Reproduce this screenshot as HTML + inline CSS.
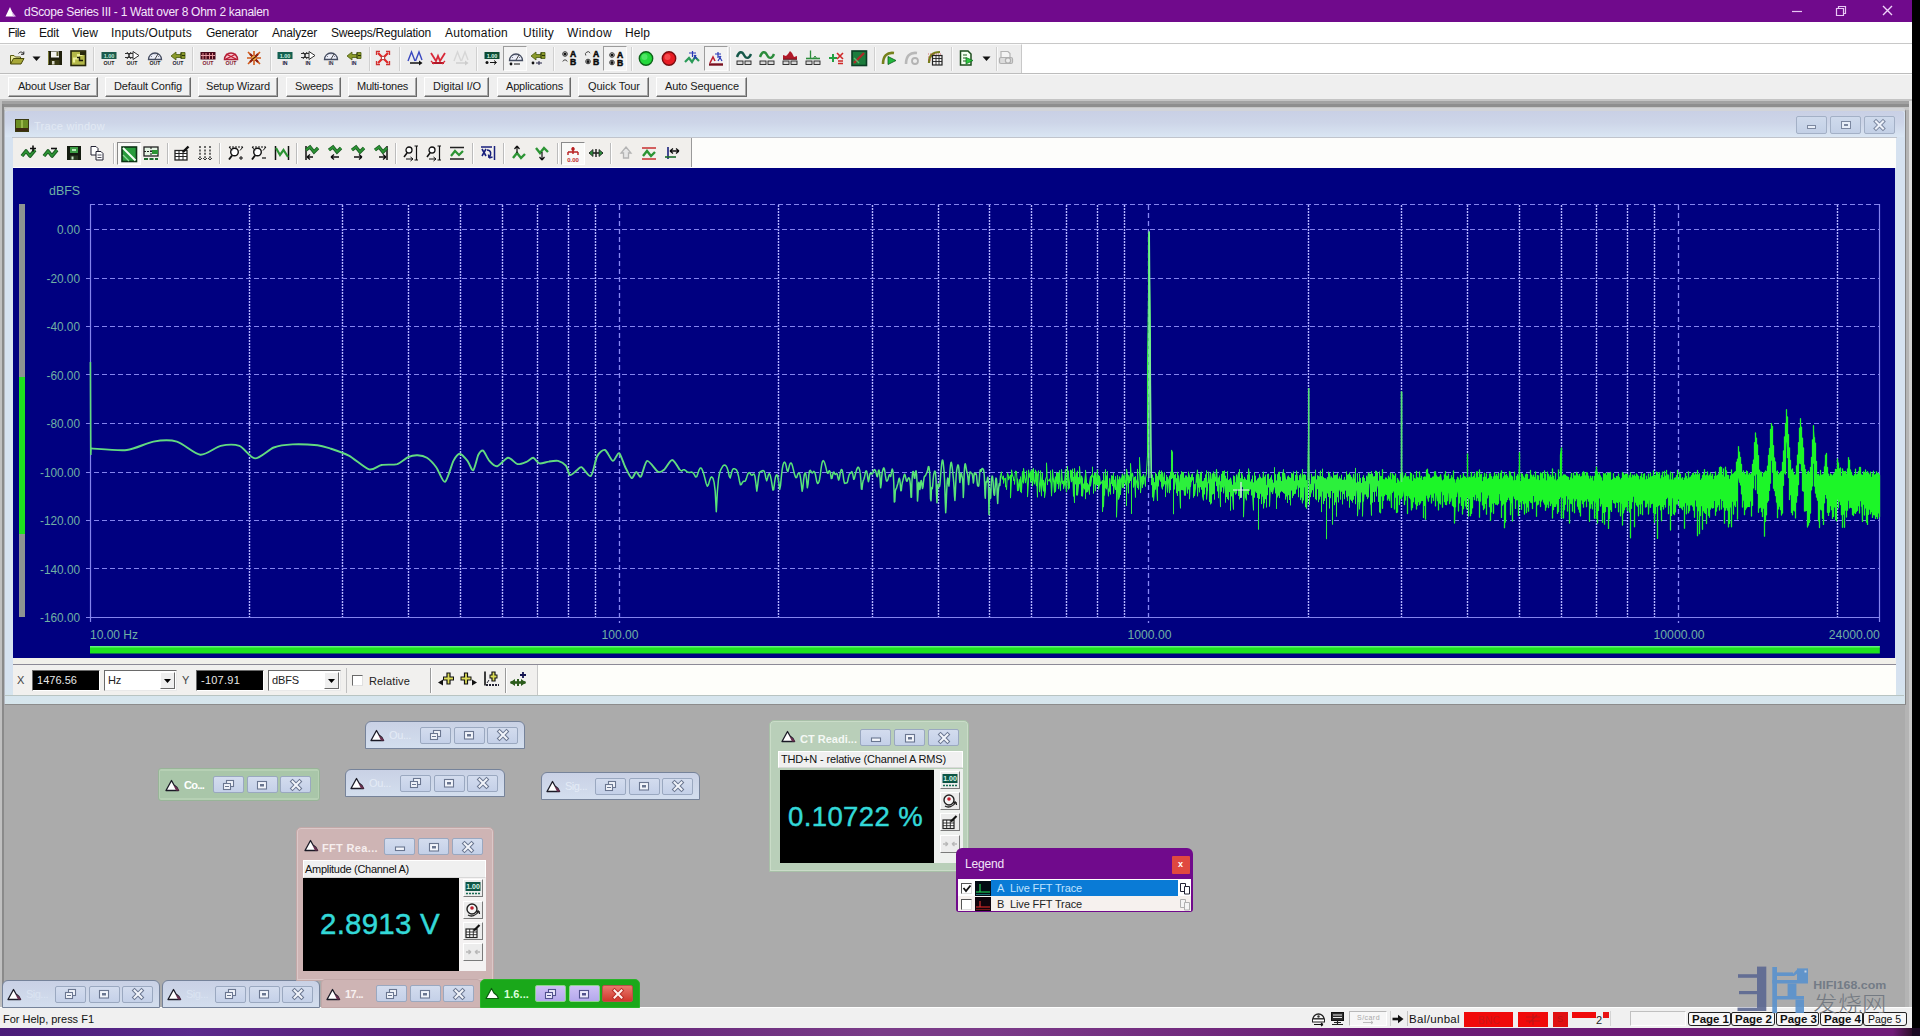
<!DOCTYPE html>
<html lang="en"><head><meta charset="utf-8"><title>dScope Series III - 1 Watt over 8 Ohm 2 kanalen</title>
<style>
html,body{margin:0;padding:0;background:#000;}
body{width:1920px;height:1036px;overflow:hidden;position:relative;font-family:"Liberation Sans",sans-serif;}
#app{position:absolute;left:0;top:0;width:1920px;height:1036px;overflow:hidden;}
#app div,#app span.t,#app svg.i{position:absolute;box-sizing:border-box;}
span.t{white-space:pre;}
svg{overflow:visible;}
svg text{font-family:"Liberation Sans",sans-serif;}
</style></head><body><div id="app">
<div style="left:0px;top:0px;width:1912px;height:23px;background:#700a8c;"></div>
<div style="left:0px;top:22px;width:1912px;height:22px;background:#ffffff;"></div>
<div style="left:0px;top:43px;width:1912px;height:1px;background:#c8c8c8;"></div>
<div style="left:0px;top:44px;width:1912px;height:30px;background:#ffffff;"></div>
<div style="left:0px;top:44px;width:1022px;height:30px;background:#ededed;border-top:1px solid #fafafa;border-right:1px solid #c8c8c8;"></div>
<div style="left:0px;top:73px;width:1912px;height:1px;background:#bdbdbd;"></div>
<div style="left:0px;top:74px;width:1912px;height:26px;background:#efefef;border-top:1px solid #fbfbfb;"></div>
<div style="left:0px;top:99px;width:1912px;height:908px;background:#ababab;"></div>
<div style="left:0px;top:99px;width:1912px;height:2px;background:#c4c4c4;"></div>
<div style="left:0px;top:101px;width:1912px;height:3px;background:#a2a2a2;"></div>
<div style="left:0px;top:104px;width:1912px;height:3px;background:#8e8e8e;"></div>
<div style="left:0px;top:107px;width:1912px;height:3px;background:#c6c6c6;"></div>
<div style="left:0px;top:101px;width:2px;height:906px;background:#c0c0c0;"></div>
<div style="left:2px;top:104px;width:2px;height:903px;background:#8a8a8a;"></div>
<div style="left:1905px;top:110px;width:7px;height:897px;background:#b4b4b4;"></div>
<div style="left:1909px;top:101px;width:3px;height:906px;background:linear-gradient(180deg,#e2e2e2,#d0d0d0 30%,#c2c2c2);"></div>
<div style="left:0px;top:1007px;width:1912px;height:21px;background:#f0f0f0;border-top:1px solid #fdfdfd;"></div>
<div style="left:0px;top:1028px;width:1912px;height:8px;background:linear-gradient(90deg,#4a1c78 0%,#5a2a8c 10%,#5a1a72 25%,#7a3c88 46%,#7a3a88 52%,#6a1c74 72%,#701c78 99%,#30102c 100%);"></div>
<div style="left:1912px;top:1028px;width:8px;height:8px;background:#1c0a24;"></div>
<svg class="i" style="left:5px;top:6px;" width="12" height="11" viewBox="0 0 12 11"><path d="M0.5 10.5 L5 1 L7 5.5 L9.5 10.5 Z" fill="#fff"/><path d="M6.5 5 L11 10.5 L8 10.5Z" fill="#d9b7e6"/></svg>
<span id="t1" class="t" style="left:24px;top:5.842px;font-size:12px;line-height:12px;color:#f4e6fa;letter-spacing:-0.270px;">dScope Series III - 1 Watt over 8 Ohm 2 kanalen</span>
<svg class="i" style="left:1791px;top:5px;" width="14" height="12" viewBox="0 0 14 12"><path d="M1 6.5 H11" stroke="#e8c8f4" stroke-width="1.2" fill="none"/></svg>
<svg class="i" style="left:1835px;top:4px;" width="14" height="14" viewBox="0 0 14 14"><path d="M1.5 4.5 H8.5 V11.5 H1.5Z M3.5 4.5 V2.5 H10.5 V9.5 H8.5" stroke="#e8c8f4" stroke-width="1.2" fill="none"/></svg>
<svg class="i" style="left:1881px;top:4px;" width="14" height="14" viewBox="0 0 14 14"><path d="M2 2 L11 11 M11 2 L2 11" stroke="#f0d4fa" stroke-width="1.4" fill="none"/></svg>
<span id="t2" class="t" style="left:8px;top:26.842px;font-size:12px;line-height:12px;color:#111;letter-spacing:-0.586px;">File</span>
<span id="t3" class="t" style="left:39px;top:26.842px;font-size:12px;line-height:12px;color:#111;letter-spacing:-0.172px;">Edit</span>
<span id="t4" class="t" style="left:72px;top:26.842px;font-size:12px;line-height:12px;color:#111;letter-spacing:0.051px;">View</span>
<span id="t5" class="t" style="left:111px;top:26.842px;font-size:12px;line-height:12px;color:#111;letter-spacing:0.210px;">Inputs/Outputs</span>
<span id="t6" class="t" style="left:206px;top:26.842px;font-size:12px;line-height:12px;color:#111;letter-spacing:-0.226px;">Generator</span>
<span id="t7" class="t" style="left:272px;top:26.842px;font-size:12px;line-height:12px;color:#111;letter-spacing:-0.211px;">Analyzer</span>
<span id="t8" class="t" style="left:331px;top:26.842px;font-size:12px;line-height:12px;color:#111;letter-spacing:-0.201px;">Sweeps/Regulation</span>
<span id="t9" class="t" style="left:445px;top:26.842px;font-size:12px;line-height:12px;color:#111;letter-spacing:0.228px;">Automation</span>
<span id="t10" class="t" style="left:523px;top:26.842px;font-size:12px;line-height:12px;color:#111;letter-spacing:0.237px;">Utility</span>
<span id="t11" class="t" style="left:567px;top:26.842px;font-size:12px;line-height:12px;color:#111;letter-spacing:0.385px;">Window</span>
<span id="t12" class="t" style="left:625px;top:26.842px;font-size:12px;line-height:12px;color:#111;letter-spacing:0.078px;">Help</span>
<div style="left:8px;top:77px;width:90px;height:20px;background:#f1f1f1;border:1px solid;border-color:#fff #6a6a6a #6a6a6a #fff;box-shadow:inset -1px -1px 0 #a8a8a8;"></div>
<span id="t13" class="t" style="left:18px;top:81.1885px;font-size:11px;line-height:11px;color:#1a1a1a;letter-spacing:-0.229px;">About User Bar</span>
<div style="left:105px;top:77px;width:86px;height:20px;background:#f1f1f1;border:1px solid;border-color:#fff #6a6a6a #6a6a6a #fff;box-shadow:inset -1px -1px 0 #a8a8a8;"></div>
<span id="t14" class="t" style="left:114px;top:81.1885px;font-size:11px;line-height:11px;color:#1a1a1a;letter-spacing:-0.122px;">Default Config</span>
<div style="left:198px;top:77px;width:80px;height:20px;background:#f1f1f1;border:1px solid;border-color:#fff #6a6a6a #6a6a6a #fff;box-shadow:inset -1px -1px 0 #a8a8a8;"></div>
<span id="t15" class="t" style="left:206px;top:81.1885px;font-size:11px;line-height:11px;color:#1a1a1a;letter-spacing:-0.169px;">Setup Wizard</span>
<div style="left:286px;top:77px;width:55px;height:20px;background:#f1f1f1;border:1px solid;border-color:#fff #6a6a6a #6a6a6a #fff;box-shadow:inset -1px -1px 0 #a8a8a8;"></div>
<span id="t16" class="t" style="left:295px;top:81.1885px;font-size:11px;line-height:11px;color:#1a1a1a;letter-spacing:-0.190px;">Sweeps</span>
<div style="left:348px;top:77px;width:69px;height:20px;background:#f1f1f1;border:1px solid;border-color:#fff #6a6a6a #6a6a6a #fff;box-shadow:inset -1px -1px 0 #a8a8a8;"></div>
<span id="t17" class="t" style="left:357px;top:81.1885px;font-size:11px;line-height:11px;color:#1a1a1a;letter-spacing:-0.255px;">Multi-tones</span>
<div style="left:424px;top:77px;width:65px;height:20px;background:#f1f1f1;border:1px solid;border-color:#fff #6a6a6a #6a6a6a #fff;box-shadow:inset -1px -1px 0 #a8a8a8;"></div>
<span id="t18" class="t" style="left:433px;top:81.1885px;font-size:11px;line-height:11px;color:#1a1a1a;letter-spacing:-0.027px;">Digital I/O</span>
<div style="left:497px;top:77px;width:74px;height:20px;background:#f1f1f1;border:1px solid;border-color:#fff #6a6a6a #6a6a6a #fff;box-shadow:inset -1px -1px 0 #a8a8a8;"></div>
<span id="t19" class="t" style="left:506px;top:81.1885px;font-size:11px;line-height:11px;color:#1a1a1a;letter-spacing:-0.194px;">Applications</span>
<div style="left:578px;top:77px;width:71px;height:20px;background:#f1f1f1;border:1px solid;border-color:#fff #6a6a6a #6a6a6a #fff;box-shadow:inset -1px -1px 0 #a8a8a8;"></div>
<span id="t20" class="t" style="left:588px;top:81.1885px;font-size:11px;line-height:11px;color:#1a1a1a;letter-spacing:-0.039px;">Quick Tour</span>
<div style="left:656px;top:77px;width:91px;height:20px;background:#f1f1f1;border:1px solid;border-color:#fff #6a6a6a #6a6a6a #fff;box-shadow:inset -1px -1px 0 #a8a8a8;"></div>
<span id="t21" class="t" style="left:665px;top:81.1885px;font-size:11px;line-height:11px;color:#1a1a1a;letter-spacing:-0.095px;">Auto Sequence</span>
<span id="t22" class="t" style="left:3px;top:1014.19px;font-size:11px;line-height:11px;color:#111;letter-spacing:-0.005px;">For Help, press F1</span>
<div style="left:4px;top:108px;width:1902px;height:597px;background:linear-gradient(180deg,#d6e2f0 0%,#d6e2f0 96%,#d6e6ec 100%);border:solid;border-width:3px 1.5px 1px 1px;border-color:#d2d4d8 #858585 #8c8c8c #b4b8c0;border-radius:4px 4px 0 0;"></div>
<div style="left:5px;top:111px;width:1899px;height:26px;background:linear-gradient(180deg,#c9d0e5 0%,#cdd5e8 45%,#dae6f3 100%);border-radius:3px 3px 0 0;"></div>
<div style="left:12px;top:137px;width:1885px;height:1px;background:#c0c4cc;"></div>
<div style="left:13px;top:138px;width:1883px;height:30px;background:#fdfdfb;"></div>
<div style="left:13px;top:138px;width:679px;height:29px;background:#f1efec;border-right:1px solid #9a9a9a;"></div>
<div style="left:13px;top:658px;width:1883px;height:37px;background:#fefefa;"></div>
<div style="left:5px;top:695px;width:1899px;height:1px;background:#b8c4c2;"></div>
<div style="left:13px;top:658px;width:1883px;height:6px;background:#f1f0ea;"></div>
<div style="left:13px;top:664px;width:1883px;height:1px;background:#8c8a96;"></div>
<div style="left:13px;top:665px;width:525px;height:30px;background:#f1f0ee;border-right:1px solid #c9c9c9;"></div>
<svg class="i" style="left:15px;top:119px;" width="14" height="13" viewBox="0 0 14 13"><rect x="0.5" y="0.5" width="13" height="12" fill="#6b8e23" stroke="#3a3a10"/><rect x="1" y="9" width="12" height="3" fill="#3c2a10"/><path d="M7 1V9" stroke="#c8e070"/></svg>
<span id="t23" class="t" style="left:34px;top:120.689px;font-size:11px;line-height:11px;color:#e2e9f4;letter-spacing:0.295px;">Trace window</span>
<div style="left:1796px;top:116px;width:31px;height:18px;background:linear-gradient(180deg,#cfdaec,#c3d0e6);border:1px solid #a3b0c6;border-radius:2px;"></div>
<svg class="i" style="left:1804px;top:119px;" width="15" height="12" viewBox="0 0 15 12"><rect x="3.5" y="6.5" width="8" height="3" fill="#e8eef8" stroke="#7c88a0"/></svg>
<div style="left:1830px;top:116px;width:31px;height:18px;background:linear-gradient(180deg,#cfdaec,#c3d0e6);border:1px solid #a3b0c6;border-radius:2px;"></div>
<svg class="i" style="left:1838px;top:119px;" width="15" height="12" viewBox="0 0 15 12"><rect x="3.5" y="2.5" width="9" height="7" fill="#e8eef8" stroke="#7c88a0"/><rect x="6" y="5" width="4" height="2" fill="#7c88a0"/></svg>
<div style="left:1864px;top:116px;width:31px;height:18px;background:linear-gradient(180deg,#cfdaec,#c3d0e6);border:1px solid #a3b0c6;border-radius:2px;"></div>
<svg class="i" style="left:1872px;top:119px;" width="15" height="12" viewBox="0 0 15 12"><path d="M4 2.5 L11 9.5 M11 2.5 L4 9.5" stroke="#7c88a0" stroke-width="4" stroke-linecap="square" fill="none"/><path d="M4 2.5 L11 9.5 M11 2.5 L4 9.5" stroke="#eef2fa" stroke-width="2" stroke-linecap="square" fill="none"/></svg>
<svg class="i" style="left:0;top:0" width="1912" height="700" viewBox="0 0 1912 700"><rect x="13" y="168" width="1882" height="490" fill="#000080"/><rect x="19" y="204" width="6" height="413" fill="#8e9492"/><rect x="19" y="377" width="6" height="157" fill="#1fe01f"/><rect x="90" y="646" width="1789.82" height="7.5" fill="#1ee21e"/><rect x="90" y="646" width="1789.82" height="1.5" fill="#62f27a"/><path d="M249.5 205V617M342.5 205V617M408.5 205V617M460.5 205V617M502.5 205V617M537.5 205V617M568.5 205V617M595.5 205V617M778.5 205V617M872.5 205V617M938.5 205V617M989.5 205V617M1031.5 205V617M1066.5 205V617M1097.5 205V617M1124.5 205V617M1308.5 205V617M1401.5 205V617M1467.5 205V617M1519.5 205V617M1561.5 205V617M1596.5 205V617M1627.5 205V617M1654.5 205V617M1837.5 205V617" stroke="#b4b4ff" stroke-width="1.4" stroke-dasharray="2 1" fill="none"/><path d="M619.5 205V623M1148.5 205V623M1678.5 205V623" stroke="#8888f4" stroke-width="1.3" stroke-dasharray="5 3" fill="none"/><path d="M86 229.5H1879.82M86 278.5H1879.82M86 326.5H1879.82M86 374.5H1879.82M86 423.5H1879.82M86 472.5H1879.82M86 520.5H1879.82M86 568.5H1879.82 M90 204.5H1879.82" stroke="#8484ee" stroke-width="1.1" stroke-dasharray="5 3" fill="none"/><path d="M90.5 204V622 M1879.5 204V622 M86 617.5H1879.82" stroke="#8484ee" stroke-width="1.2" fill="none"/><text x="80" y="194.5" font-size="12" fill="#70b0a4" text-anchor="end" textLength="31" lengthAdjust="spacingAndGlyphs">dBFS</text><text x="80" y="234" font-size="12" fill="#70b0a4" text-anchor="end" textLength="23" lengthAdjust="spacingAndGlyphs">0.00</text><text x="80" y="282.5" font-size="12" fill="#70b0a4" text-anchor="end" textLength="33.5" lengthAdjust="spacingAndGlyphs">-20.00</text><text x="80" y="331" font-size="12" fill="#70b0a4" text-anchor="end" textLength="33.5" lengthAdjust="spacingAndGlyphs">-40.00</text><text x="80" y="379.5" font-size="12" fill="#70b0a4" text-anchor="end" textLength="33.5" lengthAdjust="spacingAndGlyphs">-60.00</text><text x="80" y="428" font-size="12" fill="#70b0a4" text-anchor="end" textLength="33.5" lengthAdjust="spacingAndGlyphs">-80.00</text><text x="80" y="476.5" font-size="12" fill="#70b0a4" text-anchor="end" textLength="40" lengthAdjust="spacingAndGlyphs">-100.00</text><text x="80" y="525" font-size="12" fill="#70b0a4" text-anchor="end" textLength="40" lengthAdjust="spacingAndGlyphs">-120.00</text><text x="80" y="573.5" font-size="12" fill="#70b0a4" text-anchor="end" textLength="40" lengthAdjust="spacingAndGlyphs">-140.00</text><text x="80" y="622" font-size="12" fill="#70b0a4" text-anchor="end" textLength="40" lengthAdjust="spacingAndGlyphs">-160.00</text><text x="90" y="638.5" font-size="12" fill="#70b0a4" text-anchor="start" textLength="48" lengthAdjust="spacingAndGlyphs">10.00 Hz</text><text x="620" y="638.5" font-size="12" fill="#70b0a4" text-anchor="middle" textLength="37" lengthAdjust="spacingAndGlyphs">100.00</text><text x="1149.5" y="638.5" font-size="12" fill="#70b0a4" text-anchor="middle" textLength="44" lengthAdjust="spacingAndGlyphs">1000.00</text><text x="1679" y="638.5" font-size="12" fill="#70b0a4" text-anchor="middle" textLength="51" lengthAdjust="spacingAndGlyphs">10000.00</text><text x="1879.82" y="638.5" font-size="12" fill="#70b0a4" text-anchor="end" textLength="51" lengthAdjust="spacingAndGlyphs">24000.00</text><path d="M90.4 362L90.8 455L91 448.4" fill="none" stroke="#62da80" stroke-width="1.6"/><path d="M90.9 448.4C95.7 448.6 118.5 450.9 126.9 450.0C135.2 449.1 146.8 442.7 153.4 441.6C160.1 440.4 170.6 439.8 176.9 441.6C183.1 443.3 194.5 454.1 200.3 454.7C206.1 455.3 215.4 447.1 220.6 445.9C225.8 444.8 234.8 444.3 239.4 445.9C244.0 447.6 250.4 458.2 255.0 458.4C259.6 458.6 268.8 449.4 273.8 447.5C278.8 445.6 286.7 444.7 292.5 444.4C298.3 444.1 312.5 444.8 317.5 445.3C322.5 445.9 325.8 447.1 330.0 448.4C334.2 449.8 343.5 452.8 348.8 455.6C354.0 458.4 364.7 468.1 369.1 469.4C373.4 470.6 377.8 465.7 381.6 465.0C385.3 464.3 393.6 465.1 397.2 464.1C400.7 463.0 405.4 458.4 408.1 457.2C410.8 456.0 415.0 455.2 417.5 455.3C420.0 455.4 424.4 456.2 426.9 457.8C429.4 459.4 433.8 464.0 436.2 467.2C438.7 470.4 442.7 482.7 445.0 481.9C447.3 481.0 451.5 464.7 453.4 460.9C455.4 457.2 457.8 453.8 459.7 453.8C461.6 453.8 465.7 458.7 467.5 460.9C469.3 463.1 471.7 471.1 473.1 470.3C474.6 469.5 477.1 457.3 478.4 454.7C479.8 452.1 481.7 449.8 483.1 450.6C484.6 451.5 487.5 458.9 489.4 460.9C491.2 463.0 494.7 466.7 497.2 466.2C499.7 465.8 505.4 458.1 508.1 457.8C510.8 457.5 515.0 463.6 517.5 464.1C520.0 464.6 524.8 462.4 526.9 461.6C529.0 460.7 531.5 457.6 533.1 457.8C534.8 458.1 537.3 462.9 539.4 463.4C541.5 463.9 546.2 461.9 548.8 461.6C551.2 461.2 555.8 460.4 558.1 460.9C560.4 461.5 564.4 463.8 565.9 465.6C567.5 467.5 568.5 474.4 570.0 475.0C571.5 475.6 575.3 471.4 576.9 470.3C578.4 469.3 579.7 466.4 581.6 467.2C583.4 467.9 588.9 477.4 590.9 475.9C593.0 474.5 595.3 459.7 597.2 456.2C599.1 452.8 602.9 449.4 605.0 450.0C607.1 450.6 610.9 460.5 612.8 460.9C614.7 461.4 617.4 452.3 619.1 453.1C620.7 454.0 623.6 463.9 625.3 467.2C627.0 470.5 630.1 477.5 631.6 478.1C633.0 478.8 635.0 472.1 636.2 471.9C637.5 471.7 639.5 478.0 640.9 476.6C642.4 475.1 644.9 461.6 647.2 460.9C649.5 460.3 655.8 470.8 658.1 471.9C660.4 473.0 662.5 471.0 664.4 469.4C666.2 467.8 670.1 459.9 672.2 460.0C674.3 460.1 679.0 468.9 680.0 470.3" fill="none" stroke="#62da80" stroke-width="1.9" stroke-linejoin="round"/><polyline points="680.0,470.3 680.5,470.3 681.8,471.1 683.1,469.7 684.3,469.7 685.6,470.7 686.9,471.7 688.1,472.3 689.4,472.5 690.6,472.3 691.8,472.1 693.1,472.8 694.3,474.7 695.5,476.9 696.7,476.8 697.9,473.4 699.1,469.8 700.3,467.9 701.5,468.3 702.6,470.6 703.8,474.3 705.0,478.7 706.1,483.2 707.3,486.2 708.4,484.7 709.6,480.6 710.7,477.7 711.8,476.9 713.0,478.3 714.1,482.4 715.2,491.2 716.3,511.8 717.4,491.2 718.5,479.0 719.6,473.0 720.7,469.8 721.8,467.8 722.8,466.1 723.9,465.2 725.0,465.1 726.0,465.9 727.1,467.7 728.2,471.2 729.2,476.2 730.2,478.0 731.3,473.7 732.3,470.1 733.3,468.8 734.4,468.8 735.4,469.1 736.4,469.8 737.4,471.9 738.4,475.7 739.4,480.7 740.4,484.7 741.4,484.5 742.4,482.4 743.4,481.2 744.4,481.3 745.3,481.0 746.3,478.6 747.3,475.4 748.3,473.1 749.2,472.5 750.2,473.5 751.1,474.9 752.1,475.2 753.0,474.2 754.0,473.9 754.9,476.3 755.8,482.7 756.8,491.1 757.7,484.8 758.6,476.8 759.5,472.8 760.4,471.4 761.3,471.2 762.3,470.8 763.2,470.5 764.1,471.1 765.0,473.5 765.8,477.9 766.7,480.7 767.6,477.9 768.5,474.5 769.4,473.6 770.3,475.4 771.1,479.2 772.0,484.4 772.9,490.1 773.7,489.6 774.6,482.7 775.4,477.3 776.3,474.9 777.1,475.1 778.0,477.7 778.8,483.0 779.7,489.3 780.5,485.7 781.4,476.2 782.2,469.3 783.0,465.0 783.8,462.7 784.7,462.1 785.5,463.4 786.3,466.6 787.1,470.5 787.9,471.6 788.7,468.6 789.5,465.2 790.3,463.2 791.1,462.9 791.9,464.1 792.7,466.8 793.5,470.2 794.3,473.5 795.1,476.1 795.9,477.8 796.7,477.4 797.4,475.3 798.2,473.4 799.0,472.9 799.8,474.1 800.5,477.6 801.3,483.8 802.1,491.2 802.8,488.3 803.6,480.1 804.3,474.8 805.1,472.7 805.8,474.0 806.6,479.5 807.3,487.8 808.1,483.8 808.8,475.3 809.5,471.1 810.3,470.2 811.0,471.3 811.7,472.8 812.5,472.9 813.2,472.0 813.9,471.4 814.6,472.2 815.4,474.5 816.1,478.2 816.8,481.8 817.5,483.5 818.2,483.1 818.9,481.8 819.6,479.2 820.3,474.6 821.0,469.1 821.7,464.5 822.4,461.6 823.1,460.6 823.8,461.1 824.5,462.5 825.2,464.7 825.9,467.4 826.6,470.4 827.3,472.9 828.0,473.3 828.6,471.7 829.3,470.7 830.0,471.7 830.7,474.9 831.3,478.6 832.0,478.3 832.7,474.7 833.3,472.2 834.0,472.1 834.7,473.6 835.3,474.5 836.0,473.8 836.6,473.3 837.3,474.5 837.9,477.6 838.6,480.1 839.2,478.8 839.9,475.0 840.5,471.7 841.2,469.7 841.8,469.5 842.5,471.3 843.1,475.0 843.7,479.6 844.4,482.9 845.0,483.5 845.6,483.1 846.3,483.0 846.9,483.0 847.5,481.9 848.1,479.0 848.8,475.9 849.4,474.1 850.0,473.6 850.6,473.3 851.2,472.3 851.8,471.6 852.5,472.9 853.1,476.2 853.7,479.3 854.3,478.9 854.9,476.4 855.5,473.7 856.1,471.5 856.7,469.6 857.3,468.1 857.9,467.2 858.5,467.3 859.1,468.4 859.7,470.3 860.3,474.0 860.9,480.5 861.4,489.0 862.0,489.2 862.6,483.7 863.2,480.7 863.8,479.5 864.4,477.6 865.0,474.6 865.5,472.0 866.1,470.8 866.7,471.4 867.3,474.1 867.8,478.6 868.4,481.7 869.0,479.6 869.5,475.9 870.1,473.6 870.7,473.0 871.2,473.4 871.8,474.0 872.4,473.7 872.9,472.4 873.5,470.9 874.0,469.9 874.6,469.6 875.1,470.1 875.7,471.4 876.3,473.6 876.8,476.1 877.4,476.8 877.9,474.1 878.4,470.9 879.0,470.0 879.5,472.4 880.1,479.1 880.6,487.8 881.2,484.1 881.7,476.7 882.2,472.6 882.8,470.2 883.3,468.5 883.8,467.9 884.4,469.0 884.9,471.8 885.4,475.7 886.0,479.2 886.5,481.0 887.0,480.9 887.6,480.2 888.1,478.9 888.6,476.9 889.1,475.1 889.6,474.7 890.2,475.9 890.7,476.4 891.2,473.9 891.7,470.6 892.2,469.0 892.7,470.0 893.3,474.3 893.8,483.7 894.3,502.0 894.8,501.4 895.3,491.4 895.8,489.1 896.3,488.7 896.8,487.1 897.3,485.2 897.8,483.7 898.3,481.6 898.8,479.2 899.3,478.2 899.8,479.8 900.3,484.6 900.8,490.8 901.3,490.4 901.8,485.7 902.3,482.6 902.8,480.8 903.3,478.8 903.8,476.5 904.3,474.7 904.7,474.2 905.2,475.3 905.7,477.7 906.2,480.1 906.7,481.3 907.2,481.0 907.6,479.8 908.1,478.6 908.6,477.8 909.1,477.9 909.6,478.9 910.0,481.1 910.5,486.2 911.0,497.3 911.5,497.3 911.9,482.4 912.4,474.5 912.9,471.4 913.3,471.5 913.8,474.2 914.3,477.9 914.8,478.3 915.2,474.5 915.7,471.2 916.1,470.9 916.6,474.5 917.1,483.7 917.5,501.1 918.0,494.5 918.5,484.4 918.9,482.2 919.4,485.0 919.8,489.5 920.3,487.5 920.7,482.5 921.2,480.4 921.6,481.8 922.1,485.6 922.5,488.6 923.0,486.9 923.4,482.6 923.9,478.9 924.3,476.7 924.8,476.0 925.2,475.9 925.7,475.3 926.1,474.2 926.6,473.2 927.0,472.3 927.5,470.8 927.9,468.6 928.3,466.8 928.8,466.6 929.2,468.5 929.7,473.2 930.1,482.2 930.5,498.7 931.0,500.7 931.4,490.0 931.8,487.6 932.3,488.7 932.7,485.7 933.1,479.8 933.6,475.5 934.0,473.1 934.4,471.8 934.8,471.1 935.3,471.7 935.7,474.7 936.1,481.3 936.5,493.9 937.0,502.8 937.4,491.2 937.8,485.1 938.2,483.9 938.7,485.1 939.1,486.4 939.5,486.6 939.9,484.7 940.3,480.0 940.7,474.2 941.2,469.0 941.6,464.6 942.0,461.5 942.4,460.0 942.8,460.4 943.2,462.5 943.6,466.3 944.1,471.8 944.5,479.4 944.9,489.6 945.3,503.0 945.7,512.8 946.1,505.9 946.5,495.5 946.9,486.8 947.3,480.8 947.7,478.1 948.1,478.7 948.5,482.4 948.9,486.1 949.3,482.5 949.7,475.2 950.1,469.2 950.5,465.1 950.9,462.8 951.3,462.4 951.7,463.8 952.1,466.6 952.5,470.1 952.9,473.8 953.3,477.6 953.7,482.2 954.1,488.4 954.5,495.9 954.9,500.4 955.3,493.9 955.7,484.3 956.1,477.1 956.4,472.6 956.8,469.7 957.2,467.5 957.6,465.8 958.0,464.9 958.4,465.4 958.8,467.7 959.2,472.4 959.5,479.0 959.9,482.4 960.3,478.2 960.7,474.2 961.1,472.9 961.5,473.9 961.8,475.6 962.2,477.0 962.6,479.5 963.0,485.7 963.3,497.4 963.7,489.9 964.1,476.0 964.5,468.2 964.9,464.6 965.2,463.7 965.6,464.8 966.0,466.9 966.3,469.1 966.7,471.0 967.1,472.5 967.5,474.1 967.8,476.7 968.2,481.0 968.6,484.6 968.9,482.1 969.3,477.0 969.7,473.5 970.0,472.1 970.4,472.0 970.8,472.4 971.1,472.9 971.5,473.2 971.9,473.4 972.2,474.0 972.6,475.8 973.0,479.3 973.3,483.0 973.7,481.2 974.0,476.0 974.4,473.0 974.8,472.9 975.1,474.1 975.5,474.3 975.8,473.6 976.2,473.8 976.6,476.0 976.9,479.6 977.3,483.4 977.6,485.6 978.0,486.1 978.3,486.2 978.7,486.0 979.0,483.5 979.4,478.4 979.7,473.3 980.1,470.3 980.4,469.7 980.8,470.7 981.1,471.4 981.5,470.4 981.8,469.0 982.2,468.4 982.5,468.5 982.9,468.9 983.2,469.2 983.6,469.9 983.9,471.8 984.3,475.7 984.6,483.2 985.0,495.1 985.3,498.3 985.6,488.7 986.0,483.1 986.3,481.5 986.7,482.0 987.0,481.9 987.3,479.5 987.7,477.2 988.0,477.5 988.4,482.5 988.7,495.6 989.0,514.6 989.4,495.2 989.7,488.9 990.1,490.8 990.4,498.4 990.7,497.8 991.1,487.8 991.4,481.3 991.7,477.8 992.1,476.1 992.4,476.2 992.7,478.2 993.1,481.9 993.4,487.0 993.7,492.0 994.1,494.9 994.4,495.3 994.7,494.0 995.0,489.8 995.4,484.1 995.7,479.9 996.0,478.1 996.4,478.6 996.7,481.5 997.0,487.4 997.3,497.2 997.7,503.4 998.0,497.3 998.3,491.9 998.6,488.3 999.0,485.3 999.3,483.5 999.6,483.6 999.9,485.4 1000.6,475.4" fill="none" stroke="#58e478" stroke-width="1.5" stroke-linejoin="round"/><polyline points="1000.6,475.4 1001.5,472.0 1001.5,472.0 1001.5,474.9 1001.5,474.9 1002.5,479.2 1003.5,476.0 1003.5,476.0 1003.5,483.2 1003.5,483.2 1004.4,479.0 1005.5,478.2 1005.5,478.2 1005.5,486.8 1005.5,486.8 1006.5,485.8 1006.5,485.8 1006.5,489.5 1006.5,489.5 1007.5,473.3 1008.5,476.0 1008.5,476.0 1008.5,479.8 1008.5,479.8 1009.4,477.8 1010.5,475.3 1010.5,475.3 1010.5,497.7 1010.5,497.7 1011.5,479.4 1011.5,469.9 1011.5,479.4 1011.5,469.9 1012.5,475.5 1013.5,477.8 1013.5,477.8 1013.5,480.4 1013.5,480.4 1014.5,479.6 1014.5,479.6 1014.5,484.3 1014.5,484.3 1015.5,471.1 1016.5,473.4 1016.5,471.5 1016.5,473.4 1016.5,471.5 1017.5,490.6 1017.5,478.9 1017.5,490.6 1017.5,478.9 1018.5,490.5 1019.5,479.5 1019.5,479.5 1019.5,481.2 1019.5,481.2 1020.5,491.4 1020.5,476.8 1020.5,491.4 1020.5,476.8 1021.4,492.8 1022.5,471.6 1022.5,471.6 1022.5,480.3 1022.5,480.3 1023.5,482.9 1023.5,468.4 1023.5,482.9 1023.5,468.4 1024.5,475.6 1024.5,475.6 1024.5,477.5 1024.5,477.5 1025.5,482.8 1026.5,474.0 1026.5,470.9 1026.5,474.0 1026.5,470.9 1027.5,486.1 1027.5,486.1 1027.5,496.6 1027.5,496.6 1028.5,481.6 1028.5,469.9 1028.5,481.6 1028.5,469.9 1029.5,477.3 1030.5,471.8 1030.5,471.8 1030.5,481.9 1030.5,481.9 1031.5,469.9 1031.5,469.9 1031.5,476.0 1031.5,476.0 1032.5,485.8 1032.5,470.8 1032.5,485.8 1032.5,470.8 1033.5,468.5 1033.5,468.5 1033.5,479.6 1033.5,479.6 1034.5,483.9 1035.5,470.0 1035.5,470.0 1035.5,479.6 1035.5,479.6 1036.5,485.6 1036.5,471.7 1036.5,485.6 1036.5,471.7 1037.5,497.0 1037.5,475.9 1037.5,497.0 1037.5,475.9 1038.5,470.7 1038.5,470.7 1038.5,470.9 1038.5,470.9 1039.5,491.8 1040.5,479.4 1040.5,470.7 1040.5,479.4 1040.5,470.7 1041.5,495.8 1041.5,485.9 1041.5,495.8 1041.5,485.9 1042.5,473.0 1042.5,473.0 1042.5,483.9 1042.5,483.9 1043.5,490.9 1043.5,480.3 1043.5,490.9 1043.5,480.3 1044.5,483.6 1044.5,483.6 1044.5,497.5 1044.5,497.5 1045.5,490.6 1045.5,479.4 1045.5,490.6 1045.5,479.4 1046.5,477.0 1046.5,463.0 1046.5,477.0 1046.5,463.0 1047.5,484.6 1047.5,479.3 1047.5,484.6 1047.5,479.3 1048.5,480.8 1049.5,480.8 1049.5,479.0 1049.5,480.8 1049.5,479.0 1050.5,481.9 1050.5,470.7 1050.5,481.9 1050.5,470.7 1051.5,494.2 1051.5,494.2 1051.5,495.7 1051.5,495.7 1052.5,475.7 1052.5,469.7 1052.5,475.7 1052.5,469.7 1053.5,481.4 1053.5,478.6 1053.5,481.4 1053.5,478.6 1054.5,492.4 1054.5,482.4 1054.5,492.4 1054.5,482.4 1055.5,476.8 1055.5,476.8 1055.5,491.5 1055.5,491.5 1056.5,476.9 1056.5,472.2 1056.5,476.9 1056.5,472.2 1057.5,483.6 1057.5,473.6 1057.5,483.6 1057.5,473.6 1058.5,473.1 1058.5,473.1 1058.5,488.8 1058.5,488.8 1059.5,473.6 1059.5,470.6 1059.5,473.6 1059.5,470.6 1060.5,490.4 1060.5,486.0 1060.5,490.4 1060.5,486.0 1061.5,480.4 1061.5,469.6 1061.5,480.4 1061.5,469.6 1062.5,483.2 1062.5,483.2 1062.5,483.6 1062.5,483.6 1063.5,481.1 1063.5,481.1 1063.5,488.7 1063.5,488.7 1064.5,484.7 1064.5,481.8 1064.5,484.7 1064.5,481.8 1065.5,469.6 1065.5,469.6 1065.5,483.1 1065.5,483.1 1066.5,491.7 1066.5,488.6 1066.5,491.7 1066.5,488.6 1067.5,466.6 1067.5,466.6 1067.5,471.2 1067.5,471.2 1068.5,489.3 1068.5,471.0 1068.5,489.3 1068.5,483.9 1069.5,488.1 1069.5,482.7 1069.5,488.1 1069.5,482.7 1070.5,476.4 1070.5,470.0 1070.5,476.4 1070.5,470.0 1071.5,471.1 1071.5,471.1 1071.5,481.8 1071.5,481.8 1072.5,476.9 1072.5,469.0 1072.5,476.9 1072.5,469.0 1073.5,496.1 1073.5,477.3 1073.5,496.1 1073.5,477.3 1074.5,502.5 1074.5,468.5 1074.5,502.5 1074.5,468.5 1075.5,483.4 1075.5,483.4 1075.5,484.0 1075.5,484.0 1076.5,472.6 1076.5,472.6 1076.5,495.0 1076.5,495.0 1077.5,471.1 1077.5,471.1 1077.5,495.1 1077.5,495.1 1078.5,485.7 1078.5,477.5 1078.5,485.7 1078.5,477.5 1079.5,483.7 1079.5,466.5 1079.5,483.7 1079.5,466.5 1080.5,480.4 1080.5,480.4 1080.5,481.8 1080.5,481.8 1081.5,486.0 1081.5,475.9 1081.5,495.7 1081.5,475.9 1082.5,478.7 1082.5,478.7 1082.5,496.1 1082.5,496.1 1083.5,483.9 1083.5,483.9 1083.5,484.3 1083.5,484.3 1084.5,488.9 1084.5,482.8 1084.5,488.9 1084.5,482.8 1085.5,473.8 1085.5,470.3 1085.5,498.6 1085.5,470.3 1086.5,481.1 1086.5,481.1 1086.5,492.1 1086.5,492.1 1087.5,483.4 1087.5,483.4 1087.5,491.6 1087.5,491.6 1088.5,485.9 1088.5,484.8 1088.5,485.9 1088.5,484.8 1089.5,494.2 1089.5,482.5 1089.5,494.2 1089.5,482.6 1090.5,476.5 1090.5,476.5 1090.5,486.1 1090.5,486.1 1091.5,480.0 1091.5,475.0 1091.5,480.0 1091.5,475.0 1092.5,477.0 1092.5,466.9 1092.5,477.0 1092.5,475.1 1093.5,476.9 1093.5,476.9 1093.5,493.1 1093.5,493.1 1094.5,473.2 1094.5,473.2 1094.5,483.7 1094.5,483.7 1095.5,473.0 1095.5,473.0 1095.5,490.7 1095.5,483.0 1096.5,484.4 1096.5,478.9 1096.5,484.4 1096.5,478.9 1097.5,469.8 1097.5,469.8 1097.5,484.4 1097.5,484.4 1098.5,475.1 1098.5,475.1 1098.5,489.1 1098.5,489.1 1099.5,484.8 1099.5,476.2 1099.5,484.8 1099.5,476.2 1100.5,484.3 1100.5,482.1 1100.5,484.3 1100.5,482.1 1101.5,483.1 1101.5,482.6 1101.5,483.1 1101.5,482.6 1102.5,480.5 1102.5,480.5 1102.5,511.5 1102.5,511.5 1103.5,490.7 1103.5,473.0 1103.5,506.6 1103.5,506.6 1104.5,481.1 1104.5,481.1 1104.5,495.2 1104.5,495.2 1105.5,469.5 1105.5,469.5 1105.5,487.9 1105.5,487.9 1106.5,475.7 1106.5,475.7 1106.5,489.0 1106.5,489.0 1107.5,475.0 1107.5,471.5 1107.5,483.2 1107.5,483.2 1108.5,495.9 1108.5,488.9 1108.5,495.9 1108.5,488.9 1109.5,491.2 1109.5,478.4 1109.5,491.2 1109.5,485.1 1110.5,494.1 1110.5,484.2 1110.5,494.1 1110.5,484.2 1111.5,477.6 1111.5,475.4 1111.5,483.4 1111.5,483.4 1112.5,476.3 1112.5,476.3 1112.5,485.8 1112.5,485.8 1113.5,473.3 1113.5,473.3 1113.5,493.5 1113.5,493.5 1114.5,480.1 1114.5,480.1 1114.5,481.5 1114.5,481.5 1115.5,489.5 1115.5,476.5 1115.5,489.5 1115.5,476.5 1116.5,488.2 1116.5,488.2 1116.5,517.0 1116.5,517.0 1117.5,488.8 1117.5,475.4 1117.5,488.8 1117.5,475.4 1118.5,492.7 1118.5,479.7 1118.5,499.2 1118.5,499.2 1119.5,496.6 1119.5,476.8 1119.5,496.6 1119.5,476.8 1120.5,479.7 1120.5,479.7 1120.5,494.4 1120.5,492.5 1121.5,481.2 1121.5,478.7 1121.5,481.2 1121.5,478.7 1122.5,473.9 1122.5,473.9 1122.5,487.4 1122.5,487.4 1123.5,476.1 1123.5,476.1 1123.5,487.5 1123.5,487.5 1124.5,474.5 1124.5,474.5 1124.5,482.4 1124.5,482.4 1125.5,480.6 1125.5,480.6 1125.5,484.4 1125.5,484.4 1126.5,471.8 1126.5,469.3 1126.5,505.5 1126.5,469.3 1127.5,474.6 1127.5,474.6 1127.5,479.9 1127.5,476.0 1128.5,493.0 1128.5,475.4 1128.5,493.0 1128.5,475.4 1129.5,480.8 1129.5,480.8 1129.5,482.8 1129.5,480.8 1130.5,473.6 1130.5,463.6 1130.5,480.5 1130.5,463.6 1131.5,481.9 1131.5,473.8 1131.5,513.5 1131.5,473.8 1132.5,476.0 1132.5,473.0 1132.5,476.0 1132.5,473.0 1133.5,480.3 1133.5,480.3 1133.5,487.2 1133.5,487.2 1134.5,477.3 1134.5,477.3 1134.5,480.4 1134.5,478.0 1135.5,497.2 1135.5,476.6 1135.5,497.2 1135.5,478.9 1136.5,481.5 1136.5,481.5 1136.5,481.7 1136.5,481.7 1137.5,487.4 1137.5,469.2 1137.5,487.4 1137.5,480.3 1138.5,488.6 1138.5,483.4 1138.5,489.2 1138.5,489.2 1139.5,470.2 1139.5,457.6 1139.5,470.2 1139.5,459.7 1140.5,476.3 1140.5,476.3 1140.5,492.6 1140.5,492.6 1141.5,481.0 1141.5,477.2 1141.5,481.0 1141.5,477.2 1142.5,476.1 1142.5,476.1 1142.5,487.5 1142.5,480.2 1143.5,483.9 1143.5,474.3 1143.5,483.9 1143.5,474.3 1144.5,478.4 1144.5,478.4 1144.5,479.1 1144.5,478.4 1145.5,486.3 1145.5,478.0 1145.5,486.3 1145.5,478.0 1146.5,473.6 1146.5,470.9 1146.5,473.6 1146.5,470.9 1147.5,455.8 1147.5,361.3 1147.5,455.8 1147.5,361.3 1148.5,295.8 1148.5,234.3 1148.5,295.8 1148.5,234.3 1149.5,231.9 1149.5,231.9 1149.5,277.2 1149.5,277.2 1150.5,337.8 1150.5,337.8 1150.5,444.5 1150.5,444.5 1151.5,475.2 1151.5,473.2 1151.5,484.7 1151.5,484.7 1152.5,474.9 1152.5,474.9 1152.5,496.9 1152.5,484.2 1153.5,478.7 1153.5,477.9 1153.5,500.6 1153.5,500.6 1154.5,489.7 1154.5,482.6 1154.5,489.7 1154.5,482.6 1155.5,489.2 1155.5,472.7 1155.5,489.2 1155.5,486.2 1156.5,474.3 1156.5,474.3 1156.5,483.3 1156.5,483.3 1157.5,500.4 1157.5,476.5 1157.5,500.4 1157.5,487.4 1158.5,475.6 1158.5,472.3 1158.5,486.0 1158.5,472.3 1159.5,479.2 1159.5,470.4 1159.5,479.2 1159.5,476.8 1160.5,481.2 1160.5,474.6 1160.5,481.3 1160.5,481.3 1161.5,470.9 1161.5,470.9 1161.5,486.2 1161.5,486.2 1162.5,489.1 1162.5,472.6 1162.5,489.1 1162.5,472.6 1163.5,480.0 1163.5,477.4 1163.5,486.0 1163.5,477.4 1164.5,484.0 1164.5,472.6 1164.5,484.0 1164.5,484.0 1165.5,482.2 1165.5,481.3 1165.5,496.6 1165.5,483.4 1166.5,483.9 1166.5,475.2 1166.5,483.9 1166.5,481.2 1167.5,492.3 1167.5,477.2 1167.5,492.3 1167.5,477.2 1168.5,480.8 1168.5,479.8 1168.5,482.0 1168.5,482.0 1169.5,492.7 1169.5,475.9 1169.5,492.7 1169.5,489.6 1170.5,489.7 1170.5,472.1 1170.5,489.7 1170.5,472.1 1171.5,478.6 1171.5,450.3 1171.5,478.6 1171.5,450.3 1172.5,452.5 1172.5,452.5 1172.5,477.8 1172.5,477.8 1173.5,472.6 1173.5,472.6 1173.5,513.7 1173.5,484.6 1174.5,475.3 1174.5,475.3 1174.5,489.1 1174.5,479.7 1175.5,474.2 1175.5,474.2 1175.5,480.8 1175.5,480.8 1176.5,486.1 1176.5,478.6 1176.5,492.6 1176.5,483.6 1177.5,495.4 1177.5,472.2 1177.5,495.4 1177.5,472.2 1178.5,484.7 1178.5,475.7 1178.5,490.8 1178.5,475.7 1179.5,483.4 1179.5,483.4 1179.5,490.8 1179.5,486.2 1180.5,508.0 1180.5,474.7 1180.5,508.0 1180.5,474.7 1181.5,478.1 1181.5,471.6 1181.5,489.6 1181.5,479.1 1182.5,489.7 1182.5,472.4 1182.5,489.7 1182.5,472.4 1183.5,489.9 1183.5,472.4 1183.5,489.9 1183.5,482.1 1184.5,495.3 1184.5,478.0 1184.5,495.3 1184.5,478.0 1185.5,495.3 1185.5,475.8 1185.5,495.3 1185.5,482.8 1186.5,486.3 1186.5,475.8 1186.5,486.3 1186.5,483.6 1187.5,493.1 1187.5,477.5 1187.5,493.1 1187.5,486.0 1188.5,475.2 1188.5,472.1 1188.5,489.1 1188.5,472.7 1189.5,476.3 1189.5,476.3 1189.5,498.8 1189.5,498.8 1190.5,477.5 1190.5,477.5 1190.5,486.6 1190.5,486.6 1191.5,478.2 1191.5,474.7 1191.5,481.5 1191.5,474.7 1192.5,479.2 1192.5,473.8 1192.5,480.0 1192.5,480.0 1193.5,477.5 1193.5,477.5 1193.5,497.3 1193.5,493.8 1194.5,492.4 1194.5,484.5 1194.5,495.6 1194.5,495.6 1195.5,487.7 1195.5,483.9 1195.5,489.4 1195.5,489.4 1196.5,474.8 1196.5,474.8 1196.5,482.2 1196.5,478.7 1197.5,470.0 1197.5,470.0 1197.5,496.0 1197.5,496.0 1198.5,474.3 1198.5,474.3 1198.5,487.1 1198.5,485.7 1199.5,479.2 1199.5,479.2 1199.5,491.9 1199.5,479.9 1200.5,473.0 1200.5,473.0 1200.5,486.8 1200.5,486.8 1201.5,472.1 1201.5,472.1 1201.5,489.2 1201.5,487.2 1202.5,485.1 1202.5,481.6 1202.5,495.9 1202.5,495.9 1203.5,500.1 1203.5,481.0 1203.5,500.1 1203.5,493.4 1204.5,478.9 1204.5,478.6 1204.5,493.9 1204.5,478.6 1205.5,478.6 1205.5,474.7 1205.5,487.1 1205.5,474.7 1206.5,485.1 1206.5,470.8 1206.5,499.3 1206.5,499.3 1207.5,489.0 1207.5,482.6 1207.5,490.5 1207.5,485.4 1208.5,477.0 1208.5,472.1 1208.5,482.8 1208.5,472.1 1209.5,481.0 1209.5,481.0 1209.5,501.5 1209.5,501.5 1210.5,481.0 1210.5,473.3 1210.5,504.0 1210.5,473.3 1211.5,503.0 1211.5,479.3 1211.5,503.0 1211.5,483.1 1212.5,473.7 1212.5,473.7 1212.5,494.1 1212.5,490.6 1213.5,481.2 1213.5,471.7 1213.5,493.4 1213.5,493.4 1214.5,473.7 1214.5,473.7 1214.5,499.2 1214.5,481.7 1215.5,477.1 1215.5,477.1 1215.5,481.1 1215.5,480.9 1216.5,469.4 1216.5,469.4 1216.5,485.6 1216.5,469.5 1217.5,480.2 1217.5,480.2 1217.5,491.0 1217.5,491.0 1218.5,486.6 1218.5,477.7 1218.5,497.8 1218.5,480.6 1219.5,481.0 1219.5,475.8 1219.5,484.2 1219.5,475.8 1220.5,506.6 1220.5,481.6 1220.5,506.6 1220.5,483.3 1221.5,491.3 1221.5,474.2 1221.5,491.3 1221.5,476.1 1222.5,474.6 1222.5,471.5 1222.5,487.0 1222.5,471.5 1223.5,471.6 1223.5,471.6 1223.5,493.0 1223.5,493.0 1224.5,484.9 1224.5,470.7 1224.5,484.9 1224.5,484.8 1225.5,479.3 1225.5,476.0 1225.5,502.3 1225.5,489.5 1226.5,496.5 1226.5,478.8 1226.5,496.5 1226.5,481.5 1227.5,489.9 1227.5,471.6 1227.5,498.5 1227.5,486.9 1228.5,480.4 1228.5,480.4 1228.5,499.8 1228.5,486.9 1229.5,485.0 1229.5,479.6 1229.5,491.6 1229.5,491.6 1230.5,487.2 1230.5,477.9 1230.5,510.3 1230.5,477.9 1231.5,482.6 1231.5,482.6 1231.5,496.0 1231.5,496.0 1232.5,490.9 1232.5,484.9 1232.5,495.7 1232.5,495.7 1233.5,509.2 1233.5,475.7 1233.5,509.2 1233.5,485.3 1234.5,483.9 1234.5,476.6 1234.5,491.9 1234.5,488.1 1235.5,491.2 1235.5,482.8 1235.5,494.2 1235.5,494.2 1236.5,474.8 1236.5,474.8 1236.5,493.1 1236.5,481.9 1237.5,480.2 1237.5,478.0 1237.5,489.1 1237.5,478.0 1238.5,472.8 1238.5,472.8 1238.5,495.4 1238.5,490.9 1239.5,479.8 1239.5,469.6 1239.5,499.0 1239.5,498.6 1240.5,478.5 1240.5,478.5 1240.5,497.3 1240.5,486.6 1241.5,478.8 1241.5,473.2 1241.5,496.6 1241.5,473.2 1242.5,476.4 1242.5,476.4 1242.5,486.4 1242.5,484.6 1243.5,488.2 1243.5,479.5 1243.5,516.7 1243.5,516.7 1244.5,488.6 1244.5,477.2 1244.5,491.4 1244.5,491.4 1245.5,483.5 1245.5,479.0 1245.5,497.3 1245.5,497.3 1246.5,499.9 1246.5,480.3 1246.5,499.9 1246.5,488.7 1247.5,488.0 1247.5,475.0 1247.5,493.2 1247.5,493.2 1248.5,494.2 1248.5,468.8 1248.5,494.4 1248.5,468.8 1249.5,475.9 1249.5,475.9 1249.5,490.4 1249.5,483.5 1250.5,489.0 1250.5,481.9 1250.5,489.0 1250.5,485.9 1251.5,480.1 1251.5,479.5 1251.5,495.0 1251.5,479.5 1252.5,489.3 1252.5,475.7 1252.5,493.1 1252.5,493.1 1253.5,510.0 1253.5,482.8 1253.5,510.0 1253.5,486.3 1254.5,497.3 1254.5,472.6 1254.5,497.3 1254.5,494.4 1255.5,484.7 1255.5,476.1 1255.5,491.1 1255.5,491.1 1256.5,486.8 1256.5,480.7 1256.5,492.5 1256.5,492.5 1257.5,480.4 1257.5,478.9 1257.5,497.4 1257.5,484.7 1258.5,485.9 1258.5,478.1 1258.5,529.2 1258.5,487.9 1259.5,498.4 1259.5,474.4 1259.5,498.4 1259.5,479.1 1260.5,477.1 1260.5,477.1 1260.5,493.3 1260.5,492.4 1261.5,494.5 1261.5,478.4 1261.5,503.6 1261.5,503.6 1262.5,478.6 1262.5,478.6 1262.5,496.1 1262.5,481.8 1263.5,472.1 1263.5,472.1 1263.5,508.1 1263.5,508.1 1264.5,486.7 1264.5,477.0 1264.5,502.6 1264.5,477.0 1265.5,498.7 1265.5,475.1 1265.5,498.7 1265.5,478.1 1266.5,495.3 1266.5,485.5 1266.5,507.1 1266.5,489.8 1267.5,488.2 1267.5,474.6 1267.5,494.8 1267.5,474.6 1268.5,486.9 1268.5,474.1 1268.5,486.9 1268.5,486.7 1269.5,484.1 1269.5,479.3 1269.5,506.3 1269.5,506.3 1270.5,485.6 1270.5,477.8 1270.5,486.7 1270.5,477.8 1271.5,491.7 1271.5,475.6 1271.5,491.7 1271.5,480.2 1272.5,488.3 1272.5,480.1 1272.5,493.6 1272.5,493.6 1273.5,488.6 1273.5,483.0 1273.5,488.6 1273.5,487.8 1274.5,486.1 1274.5,467.5 1274.5,486.3 1274.5,481.9 1275.5,490.8 1275.5,474.6 1275.5,493.0 1275.5,484.4 1276.5,491.0 1276.5,480.7 1276.5,508.4 1276.5,488.1 1277.5,496.9 1277.5,474.5 1277.5,496.9 1277.5,474.5 1278.5,483.0 1278.5,472.3 1278.5,495.3 1278.5,487.9 1279.5,472.0 1279.5,472.0 1279.5,497.6 1279.5,477.2 1280.5,486.6 1280.5,477.1 1280.5,491.9 1280.5,491.9 1281.5,482.0 1281.5,481.3 1281.5,490.8 1281.5,481.3 1282.5,485.0 1282.5,473.3 1282.5,491.4 1282.5,481.4 1283.5,469.5 1283.5,469.5 1283.5,492.6 1283.5,492.6 1284.5,481.7 1284.5,473.2 1284.5,493.2 1284.5,473.2 1285.5,479.1 1285.5,478.4 1285.5,499.2 1285.5,499.2 1286.5,488.2 1286.5,479.7 1286.5,496.0 1286.5,487.2 1287.5,488.9 1287.5,476.8 1287.5,502.4 1287.5,483.4 1288.5,494.7 1288.5,475.7 1288.5,494.7 1288.5,480.0 1289.5,481.5 1289.5,477.4 1289.5,499.5 1289.5,477.4 1290.5,483.7 1290.5,478.3 1290.5,505.0 1290.5,478.3 1291.5,488.0 1291.5,473.1 1291.5,490.1 1291.5,473.1 1292.5,474.6 1292.5,474.6 1292.5,497.6 1292.5,479.1 1293.5,495.1 1293.5,471.7 1293.5,495.3 1293.5,478.6 1294.5,487.7 1294.5,481.3 1294.5,493.6 1294.5,493.6 1295.5,484.8 1295.5,475.3 1295.5,493.2 1295.5,478.8 1296.5,480.6 1296.5,471.0 1296.5,489.1 1296.5,472.5 1297.5,477.2 1297.5,477.2 1297.5,484.9 1297.5,482.6 1298.5,490.1 1298.5,480.6 1298.5,496.8 1298.5,485.9 1299.5,483.8 1299.5,475.4 1299.5,487.3 1299.5,481.7 1300.5,482.9 1300.5,474.0 1300.5,499.6 1300.5,474.0 1301.5,479.1 1301.5,479.1 1301.5,497.1 1301.5,486.4 1302.5,502.9 1302.5,469.6 1302.5,502.9 1302.5,474.9 1303.5,486.6 1303.5,475.0 1303.5,499.9 1303.5,499.9 1304.5,474.2 1304.5,474.2 1304.5,486.9 1304.5,486.9 1305.5,475.3 1305.5,475.3 1305.5,506.8 1305.5,481.2 1306.5,480.5 1306.5,480.5 1306.5,508.5 1306.5,508.5 1307.5,494.9 1307.5,485.3 1307.5,501.4 1307.5,495.4 1308.5,434.8 1308.5,389.5 1308.5,453.4 1308.5,453.4 1309.5,496.1 1309.5,478.5 1309.5,504.6 1309.5,478.5 1310.5,496.5 1310.5,484.4 1310.5,496.6 1310.5,494.4 1311.5,491.5 1311.5,474.1 1311.5,491.5 1311.5,485.8 1312.5,486.5 1312.5,477.0 1312.5,489.8 1312.5,486.1 1313.5,479.4 1313.5,476.5 1313.5,496.6 1313.5,489.8 1314.5,476.8 1314.5,476.8 1314.5,483.0 1314.5,482.7 1315.5,473.6 1315.5,469.9 1315.5,498.7 1315.5,487.0 1316.5,488.0 1316.5,479.8 1316.5,499.7 1316.5,479.8 1317.5,480.7 1317.5,475.6 1317.5,488.8 1317.5,485.8 1318.5,476.2 1318.5,476.2 1318.5,501.7 1318.5,494.2 1319.5,488.5 1319.5,477.1 1319.5,499.1 1319.5,481.7 1320.5,470.9 1320.5,470.9 1320.5,496.2 1320.5,496.2 1321.5,482.2 1321.5,476.6 1321.5,511.6 1321.5,487.5 1322.5,486.1 1322.5,468.9 1322.5,491.1 1322.5,475.4 1323.5,503.6 1323.5,477.6 1323.5,503.6 1323.5,477.6 1324.5,500.4 1324.5,478.5 1324.5,500.4 1324.5,478.5 1325.5,495.9 1325.5,478.6 1325.5,497.7 1325.5,480.4 1326.5,486.2 1326.5,479.7 1326.5,538.7 1326.5,483.4 1327.5,477.4 1327.5,477.4 1327.5,492.9 1327.5,487.3 1328.5,490.1 1328.5,472.0 1328.5,496.5 1328.5,484.9 1329.5,476.3 1329.5,473.5 1329.5,508.1 1329.5,473.5 1330.5,479.3 1330.5,478.7 1330.5,497.8 1330.5,484.3 1331.5,478.2 1331.5,476.8 1331.5,490.4 1331.5,476.8 1332.5,480.2 1332.5,478.6 1332.5,524.2 1332.5,490.5 1333.5,482.9 1333.5,472.0 1333.5,492.6 1333.5,492.6 1334.5,493.1 1334.5,475.4 1334.5,504.8 1334.5,501.4 1335.5,483.4 1335.5,475.2 1335.5,501.9 1335.5,501.9 1336.5,488.2 1336.5,475.1 1336.5,516.3 1336.5,490.2 1337.5,477.0 1337.5,473.4 1337.5,496.7 1337.5,495.3 1338.5,483.9 1338.5,479.6 1338.5,502.0 1338.5,479.6 1339.5,478.0 1339.5,476.7 1339.5,489.3 1339.5,489.3 1340.5,491.7 1340.5,478.7 1340.5,499.2 1340.5,480.7 1341.5,480.0 1341.5,475.1 1341.5,491.3 1341.5,481.6 1342.5,489.2 1342.5,480.3 1342.5,504.0 1342.5,480.3 1343.5,480.6 1343.5,480.4 1343.5,493.6 1343.5,483.3 1344.5,477.3 1344.5,477.3 1344.5,498.8 1344.5,489.4 1345.5,488.0 1345.5,480.1 1345.5,490.2 1345.5,490.2 1346.5,484.8 1346.5,471.7 1346.5,496.8 1346.5,486.4 1347.5,500.6 1347.5,474.9 1347.5,500.6 1347.5,479.8 1348.5,482.7 1348.5,474.5 1348.5,495.8 1348.5,495.8 1349.5,476.4 1349.5,472.7 1349.5,507.3 1349.5,487.6 1350.5,490.6 1350.5,475.3 1350.5,499.3 1350.5,499.3 1351.5,478.5 1351.5,477.3 1351.5,500.5 1351.5,477.3 1352.5,481.2 1352.5,481.2 1352.5,502.3 1352.5,493.7 1353.5,474.3 1353.5,474.3 1353.5,499.2 1353.5,486.2 1354.5,489.9 1354.5,479.0 1354.5,495.4 1354.5,480.9 1355.5,471.7 1355.5,468.2 1355.5,503.7 1355.5,497.9 1356.5,487.8 1356.5,483.0 1356.5,490.2 1356.5,487.2 1357.5,481.4 1357.5,473.4 1357.5,515.8 1357.5,515.8 1358.5,496.5 1358.5,481.9 1358.5,501.7 1358.5,501.7 1359.5,488.1 1359.5,473.7 1359.5,508.9 1359.5,508.9 1360.5,482.3 1360.5,478.3 1360.5,502.0 1360.5,489.7 1361.5,484.8 1361.5,483.2 1361.5,492.0 1361.5,484.1 1362.5,496.2 1362.5,477.4 1362.5,516.1 1362.5,516.1 1363.5,476.2 1363.5,475.5 1363.5,501.1 1363.5,501.1 1364.5,485.2 1364.5,478.2 1364.5,494.1 1364.5,485.8 1365.5,493.9 1365.5,481.5 1365.5,493.9 1365.5,487.3 1366.5,489.3 1366.5,476.0 1366.5,496.2 1366.5,485.6 1367.5,493.1 1367.5,476.9 1367.5,498.6 1367.5,479.3 1368.5,472.7 1368.5,472.7 1368.5,497.0 1368.5,491.3 1369.5,478.1 1369.5,473.7 1369.5,483.2 1369.5,475.1 1370.5,474.3 1370.5,474.2 1370.5,504.1 1370.5,485.7 1371.5,515.3 1371.5,471.6 1371.5,515.3 1371.5,482.5 1372.5,474.0 1372.5,474.0 1372.5,502.3 1372.5,484.4 1373.5,476.8 1373.5,476.8 1373.5,491.4 1373.5,482.4 1374.5,482.1 1374.5,476.6 1374.5,501.5 1374.5,479.8 1375.5,485.6 1375.5,471.0 1375.5,491.3 1375.5,486.7 1376.5,482.6 1376.5,471.3 1376.5,495.9 1376.5,486.1 1377.5,475.0 1377.5,472.4 1377.5,485.7 1377.5,483.9 1378.5,489.4 1378.5,481.1 1378.5,501.5 1378.5,481.1 1379.5,484.1 1379.5,471.7 1379.5,512.0 1379.5,512.0 1380.5,480.9" fill="none" stroke="#2cf03c" stroke-width="1.05" stroke-linejoin="round"/><polyline points="1380.5,480.9 1380.5,476.5 1380.5,512.8 1380.5,485.1 1381.5,476.7 1381.5,476.7 1381.5,495.9 1381.5,492.5 1382.5,476.0 1382.5,469.7 1382.5,508.3 1382.5,482.3 1383.5,490.1 1383.5,479.6 1383.5,500.3 1383.5,494.1 1384.5,495.5 1384.5,480.0 1384.5,495.5 1384.5,492.4 1385.5,493.9 1385.5,477.8 1385.5,493.9 1385.5,477.8 1386.5,484.3 1386.5,478.2 1386.5,494.4 1386.5,494.4 1387.5,479.6 1387.5,479.6 1387.5,500.1 1387.5,500.1 1388.5,480.8 1388.5,476.2 1388.5,498.2 1388.5,483.4 1389.5,485.4 1389.5,478.0 1389.5,500.5 1389.5,497.1 1390.5,480.4 1390.5,473.1 1390.5,489.6 1390.5,477.1 1391.5,507.4 1391.5,479.9 1391.5,507.4 1391.5,488.5 1392.5,490.4 1392.5,473.7 1392.5,492.3 1392.5,473.7 1393.5,489.9 1393.5,475.5 1393.5,490.8 1393.5,475.5 1394.5,482.6 1394.5,476.3 1394.5,509.1 1394.5,482.1 1395.5,479.5 1395.5,474.0 1395.5,497.1 1395.5,495.6 1396.5,492.6 1396.5,483.3 1396.5,512.5 1396.5,486.0 1397.5,486.7 1397.5,478.5 1397.5,512.1 1397.5,478.5 1398.5,492.9 1398.5,480.1 1398.5,494.9 1398.5,494.9 1399.5,489.3 1399.5,481.9 1399.5,504.5 1399.5,485.7 1400.5,483.7 1400.5,473.9 1400.5,498.1 1400.5,482.9 1401.5,498.9 1401.5,392.0 1401.5,498.9 1401.5,476.9 1402.5,483.1 1402.5,472.4 1402.5,496.1 1402.5,496.1 1403.5,488.6 1403.5,478.2 1403.5,489.6 1403.5,478.2 1404.5,482.3 1404.5,476.0 1404.5,504.5 1404.5,488.1 1405.5,486.6 1405.5,473.3 1405.5,500.0 1405.5,491.8 1406.5,481.9 1406.5,476.8 1406.5,495.4 1406.5,476.8 1407.5,479.7 1407.5,476.9 1407.5,513.5 1407.5,476.9 1408.5,495.7 1408.5,476.6 1408.5,495.7 1408.5,476.6 1409.5,486.3 1409.5,479.8 1409.5,497.5 1409.5,488.6 1410.5,479.2 1410.5,473.0 1410.5,498.8 1410.5,475.9 1411.5,509.9 1411.5,473.7 1411.5,509.9 1411.5,484.9 1412.5,486.4 1412.5,481.5 1412.5,507.6 1412.5,486.3 1413.5,486.2 1413.5,475.1 1413.5,501.7 1413.5,482.2 1414.5,479.4 1414.5,478.7 1414.5,496.8 1414.5,495.6 1415.5,484.8 1415.5,479.3 1415.5,503.8 1415.5,489.7 1416.5,474.5 1416.5,471.3 1416.5,509.0 1416.5,485.8 1417.5,491.4 1417.5,477.6 1417.5,505.4 1417.5,482.3 1418.5,496.1 1418.5,478.1 1418.5,501.6 1418.5,499.9 1419.5,484.9 1419.5,472.0 1419.5,504.5 1419.5,472.0 1420.5,502.2 1420.5,478.6 1420.5,502.9 1420.5,490.1 1421.5,483.5 1421.5,476.5 1421.5,500.6 1421.5,494.4 1422.5,480.4 1422.5,480.4 1422.5,500.3 1422.5,481.0 1423.5,496.6 1423.5,477.4 1423.5,517.6 1423.5,492.9 1424.5,491.7 1424.5,477.0 1424.5,505.3 1424.5,505.3 1425.5,495.4 1425.5,477.1 1425.5,519.2 1425.5,477.1 1426.5,494.2 1426.5,470.1 1426.5,495.2 1426.5,492.2 1427.5,476.1 1427.5,469.1 1427.5,497.9 1427.5,495.7 1428.5,501.1 1428.5,473.9 1428.5,501.1 1428.5,498.2 1429.5,496.7 1429.5,475.0 1429.5,496.7 1429.5,480.7 1430.5,478.6 1430.5,478.5 1430.5,494.1 1430.5,485.7 1431.5,484.7 1431.5,478.4 1431.5,503.0 1431.5,488.9 1432.5,484.6 1432.5,477.1 1432.5,497.0 1432.5,497.0 1433.5,487.7 1433.5,476.9 1433.5,500.5 1433.5,488.6 1434.5,476.0 1434.5,471.8 1434.5,492.9 1434.5,492.5 1435.5,489.7 1435.5,471.7 1435.5,505.9 1435.5,471.7 1436.5,485.7 1436.5,475.9 1436.5,492.1 1436.5,492.1 1437.5,500.7 1437.5,477.1 1437.5,500.7 1437.5,479.2 1438.5,486.4 1438.5,477.3 1438.5,509.9 1438.5,490.0 1439.5,477.0 1439.5,477.0 1439.5,502.8 1439.5,477.1 1440.5,504.1 1440.5,474.7 1440.5,504.1 1440.5,474.7 1441.5,481.2 1441.5,481.1 1441.5,491.2 1441.5,482.4 1442.5,494.8 1442.5,480.8 1442.5,507.2 1442.5,492.2 1443.5,484.4 1443.5,480.0 1443.5,494.7 1443.5,480.0 1444.5,484.7 1444.5,474.8 1444.5,501.6 1444.5,474.8 1445.5,483.9 1445.5,471.7 1445.5,504.3 1445.5,491.0 1446.5,480.5 1446.5,476.1 1446.5,504.7 1446.5,492.2 1447.5,498.4 1447.5,476.3 1447.5,500.7 1447.5,500.7 1448.5,485.8 1448.5,474.1 1448.5,492.5 1448.5,490.3 1449.5,481.0 1449.5,479.5 1449.5,503.6 1449.5,503.6 1450.5,478.9 1450.5,478.8 1450.5,501.2 1450.5,501.2 1451.5,493.0 1451.5,475.6 1451.5,497.7 1451.5,494.2 1452.5,491.2 1452.5,477.9 1452.5,505.3 1452.5,488.1 1453.5,489.9 1453.5,470.8 1453.5,506.6 1453.5,479.1 1454.5,485.3 1454.5,479.6 1454.5,523.0 1454.5,523.0 1455.5,489.5 1455.5,483.3 1455.5,506.8 1455.5,486.2 1456.5,480.0 1456.5,480.0 1456.5,496.5 1456.5,494.4 1457.5,490.1 1457.5,477.1 1457.5,490.5 1457.5,487.6 1458.5,486.8 1458.5,478.2 1458.5,511.0 1458.5,485.6 1459.5,482.3 1459.5,480.1 1459.5,502.9 1459.5,488.0 1460.5,489.9 1460.5,475.4 1460.5,496.6 1460.5,483.6 1461.5,495.1 1461.5,478.7 1461.5,505.3 1461.5,478.7 1462.5,499.8 1462.5,478.0 1462.5,514.1 1462.5,497.4 1463.5,473.3 1463.5,473.3 1463.5,508.7 1463.5,491.0 1464.5,476.7 1464.5,476.7 1464.5,500.2 1464.5,494.4 1465.5,502.2 1465.5,477.1 1465.5,505.9 1465.5,485.6 1466.5,496.2 1466.5,478.3 1466.5,508.8 1466.5,478.3 1467.5,485.7 1467.5,453.8 1467.5,497.2 1467.5,488.9 1468.5,486.6 1468.5,477.9 1468.5,516.1 1468.5,491.9 1469.5,490.8 1469.5,477.2 1469.5,498.7 1469.5,498.7 1470.5,483.9 1470.5,478.3 1470.5,515.7 1470.5,483.3 1471.5,472.3 1471.5,472.3 1471.5,513.3 1471.5,494.9 1472.5,482.8 1472.5,477.6 1472.5,507.8 1472.5,492.3 1473.5,478.5 1473.5,476.5 1473.5,496.3 1473.5,489.5 1474.5,494.2 1474.5,473.8 1474.5,499.7 1474.5,497.6 1475.5,482.9 1475.5,478.3 1475.5,494.2 1475.5,490.0 1476.5,475.4 1476.5,471.9 1476.5,500.5 1476.5,484.6 1477.5,478.3 1477.5,472.0 1477.5,497.6 1477.5,489.6 1478.5,487.1 1478.5,477.6 1478.5,500.7 1478.5,481.4 1479.5,478.0 1479.5,470.0 1479.5,517.2 1479.5,505.3 1480.5,474.8 1480.5,474.8 1480.5,501.0 1480.5,489.5 1481.5,485.5 1481.5,474.1 1481.5,490.9 1481.5,490.9 1482.5,492.9 1482.5,481.7 1482.5,504.9 1482.5,486.9 1483.5,487.4 1483.5,477.3 1483.5,509.6 1483.5,509.6 1484.5,485.8 1484.5,473.1 1484.5,508.1 1484.5,474.7 1485.5,486.2 1485.5,477.4 1485.5,503.4 1485.5,479.6 1486.5,480.0 1486.5,474.0 1486.5,514.2 1486.5,483.7 1487.5,488.4 1487.5,479.4 1487.5,497.8 1487.5,481.0 1488.5,490.7 1488.5,478.4 1488.5,494.9 1488.5,478.4 1489.5,485.5 1489.5,473.8 1489.5,506.7 1489.5,506.7 1490.5,474.0 1490.5,474.0 1490.5,520.4 1490.5,476.2 1491.5,489.8 1491.5,476.7 1491.5,511.8 1491.5,493.7 1492.5,490.1 1492.5,479.5 1492.5,503.0 1492.5,488.2 1493.5,496.5 1493.5,476.9 1493.5,513.3 1493.5,497.7 1494.5,493.4 1494.5,472.9 1494.5,502.3 1494.5,489.1 1495.5,483.9 1495.5,476.2 1495.5,504.0 1495.5,476.2 1496.5,495.7 1496.5,474.4 1496.5,504.0 1496.5,486.5 1497.5,484.4 1497.5,476.4 1497.5,504.8 1497.5,491.8 1498.5,483.9 1498.5,473.4 1498.5,503.3 1498.5,500.7 1499.5,479.7 1499.5,479.7 1499.5,493.3 1499.5,482.2 1500.5,489.7 1500.5,473.2 1500.5,500.2 1500.5,491.7 1501.5,495.0 1501.5,470.8 1501.5,517.4 1501.5,484.3 1502.5,478.9 1502.5,478.9 1502.5,505.1 1502.5,483.9 1503.5,479.5 1503.5,476.8 1503.5,503.6 1503.5,486.8 1504.5,501.6 1504.5,472.7 1504.5,527.7 1504.5,485.6 1505.5,522.0 1505.5,475.6 1505.5,522.0 1505.5,494.6 1506.5,483.1 1506.5,474.4 1506.5,501.7 1506.5,474.4 1507.5,489.2 1507.5,476.3 1507.5,499.4 1507.5,484.7 1508.5,486.6 1508.5,478.2 1508.5,497.2 1508.5,481.0 1509.5,478.3 1509.5,471.7 1509.5,499.8 1509.5,493.1 1510.5,472.5 1510.5,472.5 1510.5,514.7 1510.5,514.7 1511.5,485.5 1511.5,475.8 1511.5,502.7 1511.5,484.0 1512.5,480.9 1512.5,476.9 1512.5,520.9 1512.5,478.9 1513.5,495.8 1513.5,480.9 1513.5,495.8 1513.5,495.0 1514.5,495.7 1514.5,472.1 1514.5,498.3 1514.5,490.9 1515.5,484.2 1515.5,480.7 1515.5,508.4 1515.5,490.8 1516.5,491.8 1516.5,476.3 1516.5,499.8 1516.5,482.8 1517.5,480.6 1517.5,474.7 1517.5,499.5 1517.5,474.7 1518.5,495.2 1518.5,477.3 1518.5,515.6 1518.5,488.4 1519.5,464.7 1519.5,452.6 1519.5,504.7 1519.5,495.5 1520.5,494.1 1520.5,481.3 1520.5,501.5 1520.5,484.7 1521.5,494.8 1521.5,473.7 1521.5,509.3 1521.5,505.5 1522.5,474.4 1522.5,474.4 1522.5,500.3 1522.5,480.8 1523.5,483.4 1523.5,476.8 1523.5,503.7 1523.5,481.0 1524.5,478.3 1524.5,478.3 1524.5,514.1 1524.5,486.6 1525.5,486.0 1525.5,474.9 1525.5,502.8 1525.5,495.2 1526.5,483.7 1526.5,473.8 1526.5,512.6 1526.5,494.2 1527.5,485.6 1527.5,474.6 1527.5,506.9 1527.5,488.7 1528.5,493.7 1528.5,479.7 1528.5,511.2 1528.5,489.0 1529.5,481.9 1529.5,479.1 1529.5,500.3 1529.5,481.1 1530.5,480.2 1530.5,470.5 1530.5,502.0 1530.5,489.9 1531.5,497.7 1531.5,475.1 1531.5,502.5 1531.5,475.5 1532.5,478.8 1532.5,478.8 1532.5,508.6 1532.5,491.0 1533.5,475.1 1533.5,475.1 1533.5,495.3 1533.5,490.8 1534.5,485.0 1534.5,477.4 1534.5,501.8 1534.5,477.4 1535.5,491.8 1535.5,471.8 1535.5,500.8 1535.5,500.8 1536.5,483.5 1536.5,480.2 1536.5,516.3 1536.5,490.1 1537.5,475.4 1537.5,475.4 1537.5,504.8 1537.5,484.0 1538.5,483.1 1538.5,476.0 1538.5,504.1 1538.5,482.0 1539.5,490.6 1539.5,480.6 1539.5,500.1 1539.5,484.8 1540.5,493.0 1540.5,472.8 1540.5,506.5 1540.5,497.1 1541.5,473.9 1541.5,473.9 1541.5,500.9 1541.5,494.2 1542.5,474.5 1542.5,472.8 1542.5,499.2 1542.5,478.4 1543.5,486.6 1543.5,478.8 1543.5,502.0 1543.5,483.3 1544.5,485.7 1544.5,470.8 1544.5,504.1 1544.5,483.5 1545.5,485.3 1545.5,474.3 1545.5,510.3 1545.5,498.8 1546.5,503.3 1546.5,481.0 1546.5,507.0 1546.5,488.9 1547.5,490.6 1547.5,472.2 1547.5,504.2 1547.5,496.4 1548.5,497.2 1548.5,474.7 1548.5,507.5 1548.5,500.9 1549.5,484.9 1549.5,477.0 1549.5,500.9 1549.5,496.2 1550.5,500.8 1550.5,475.2 1550.5,505.6 1550.5,491.9 1551.5,489.0 1551.5,477.3 1551.5,503.1 1551.5,490.0 1552.5,483.0 1552.5,469.0 1552.5,518.1 1552.5,480.9 1553.5,496.1 1553.5,476.3 1553.5,509.6 1553.5,478.3 1554.5,481.5 1554.5,479.9 1554.5,506.4 1554.5,493.7 1555.5,487.9 1555.5,473.3 1555.5,506.3 1555.5,506.3 1556.5,492.7 1556.5,480.8 1556.5,503.7 1556.5,492.6 1557.5,486.0 1557.5,479.6 1557.5,513.3 1557.5,481.2 1558.5,479.5 1558.5,470.0 1558.5,511.5 1558.5,486.4 1559.5,486.4 1559.5,477.1 1559.5,498.4 1559.5,492.4 1560.5,487.3 1560.5,455.0 1560.5,496.3 1560.5,455.0 1561.5,447.8 1561.5,447.8 1561.5,517.8 1561.5,474.4 1562.5,487.4 1562.5,476.6 1562.5,497.9 1562.5,489.6 1563.5,492.9 1563.5,474.9 1563.5,518.0 1563.5,499.3 1564.5,489.1 1564.5,474.8 1564.5,509.7 1564.5,483.6 1565.5,487.2 1565.5,475.1 1565.5,504.2 1565.5,496.1 1566.5,489.2 1566.5,476.5 1566.5,495.7 1566.5,495.7 1567.5,481.5 1567.5,476.8 1567.5,511.0 1567.5,488.6 1568.5,485.6 1568.5,477.4 1568.5,498.8 1568.5,484.1 1569.5,480.6 1569.5,480.5 1569.5,523.0 1569.5,494.8 1570.5,482.9 1570.5,477.9 1570.5,503.2 1570.5,486.1 1571.5,473.3 1571.5,473.3 1571.5,503.5 1571.5,498.2 1572.5,485.2 1572.5,478.8 1572.5,511.2 1572.5,486.2 1573.5,483.8 1573.5,473.1 1573.5,498.0 1573.5,485.1 1574.5,502.5 1574.5,476.0 1574.5,512.7 1574.5,489.3 1575.5,487.7 1575.5,476.0 1575.5,500.7 1575.5,487.9 1576.5,498.5 1576.5,472.3 1576.5,498.5 1576.5,497.6 1577.5,473.9 1577.5,473.9 1577.5,506.2 1577.5,503.6 1578.5,498.6 1578.5,476.1 1578.5,509.0 1578.5,485.2 1579.5,489.0 1579.5,474.3 1579.5,512.0 1579.5,491.6 1580.5,487.7 1580.5,477.1 1580.5,515.9 1580.5,490.0 1581.5,495.1 1581.5,476.6 1581.5,499.8 1581.5,478.7 1582.5,493.9 1582.5,473.1 1582.5,503.6 1582.5,485.5 1583.5,495.9 1583.5,471.6 1583.5,507.2 1583.5,471.6 1584.5,483.7 1584.5,473.0 1584.5,501.3 1584.5,495.7 1585.5,484.4 1585.5,475.9 1585.5,500.0 1585.5,480.0 1586.5,499.3 1586.5,472.6 1586.5,506.7 1586.5,485.2 1587.5,483.1 1587.5,473.0 1587.5,498.6 1587.5,495.5 1588.5,488.2 1588.5,476.2 1588.5,501.1 1588.5,489.5 1589.5,484.9 1589.5,479.2 1589.5,521.3 1589.5,494.9 1590.5,508.0 1590.5,476.1 1590.5,508.1 1590.5,489.2 1591.5,487.1 1591.5,478.4 1591.5,503.5 1591.5,479.5 1592.5,486.7 1592.5,476.3 1592.5,508.9 1592.5,489.4 1593.5,485.8 1593.5,481.1 1593.5,500.6 1593.5,483.1 1594.5,481.3 1594.5,476.3 1594.5,518.3 1594.5,508.8 1595.5,483.4 1595.5,471.3 1595.5,501.9 1595.5,487.5 1596.5,481.1 1596.5,467.1 1596.5,518.5 1596.5,487.2 1597.5,472.2 1597.5,472.2 1597.5,523.0 1597.5,489.1 1598.5,496.2 1598.5,474.9 1598.5,510.4 1598.5,495.1 1599.5,483.5 1599.5,472.9 1599.5,497.9 1599.5,487.7 1600.5,489.9 1600.5,475.9 1600.5,506.1 1600.5,499.9 1601.5,478.1 1601.5,477.8 1601.5,503.7 1601.5,490.2 1602.5,483.4 1602.5,481.1 1602.5,522.3 1602.5,482.9 1603.5,487.9 1603.5,473.5 1603.5,512.3 1603.5,473.5 1604.5,480.6 1604.5,474.3 1604.5,524.2 1604.5,487.6 1605.5,503.6 1605.5,473.3 1605.5,511.6 1605.5,477.1 1606.5,491.9 1606.5,475.6 1606.5,506.3 1606.5,488.2 1607.5,492.7 1607.5,473.0 1607.5,506.5 1607.5,486.9 1608.5,485.7 1608.5,473.4 1608.5,528.4 1608.5,484.1 1609.5,496.7 1609.5,473.5 1609.5,518.8 1609.5,488.6 1610.5,495.4 1610.5,472.5 1610.5,509.6 1610.5,491.6 1611.5,482.8 1611.5,480.4 1611.5,511.4 1611.5,490.5 1612.5,490.3 1612.5,479.4 1612.5,499.3 1612.5,480.7 1613.5,501.8 1613.5,473.7 1613.5,502.5 1613.5,482.8 1614.5,482.8 1614.5,478.0 1614.5,503.1 1614.5,480.1 1615.5,488.3 1615.5,478.7 1615.5,507.6 1615.5,478.7 1616.5,483.4 1616.5,476.3 1616.5,501.8 1616.5,483.1 1617.5,484.4 1617.5,476.7 1617.5,502.4 1617.5,489.9 1618.5,489.0 1618.5,473.8 1618.5,511.8 1618.5,477.2 1619.5,477.8 1619.5,477.8 1619.5,501.7 1619.5,501.7 1620.5,491.4 1620.5,479.8 1620.5,515.8 1620.5,515.8 1621.5,481.5 1621.5,478.5 1621.5,503.2 1621.5,485.9 1622.5,490.1 1622.5,472.5 1622.5,525.1 1622.5,488.6 1623.5,512.8 1623.5,473.6 1623.5,512.8 1623.5,487.0 1624.5,509.0 1624.5,475.5 1624.5,509.7 1624.5,475.5 1625.5,481.3 1625.5,474.1 1625.5,506.9 1625.5,498.8 1626.5,498.8 1626.5,474.1 1626.5,506.7 1626.5,500.5 1627.5,484.2 1627.5,474.3 1627.5,510.7 1627.5,480.5 1628.5,497.9 1628.5,478.5 1628.5,500.4 1628.5,479.8 1629.5,476.5 1629.5,475.7 1629.5,511.9 1629.5,486.1 1630.5,491.2 1630.5,472.9 1630.5,537.8 1630.5,497.2 1631.5,492.2 1631.5,478.0 1631.5,508.3 1631.5,479.2 1632.5,490.0 1632.5,475.1 1632.5,501.5 1632.5,485.4 1633.5,485.9 1633.5,476.1 1633.5,496.1 1633.5,476.1 1634.5,487.9 1634.5,474.9 1634.5,526.8 1634.5,486.5 1635.5,478.7 1635.5,476.6 1635.5,502.0 1635.5,488.2 1636.5,488.7 1636.5,473.9 1636.5,504.8 1636.5,504.8 1637.5,479.4 1637.5,475.2 1637.5,506.2 1637.5,486.9 1638.5,476.3 1638.5,476.3 1638.5,515.8 1638.5,482.2 1639.5,491.6 1639.5,479.9 1639.5,504.0 1639.5,498.1 1640.5,476.5 1640.5,476.5 1640.5,513.7 1640.5,487.8 1641.5,503.6 1641.5,473.7 1641.5,503.6 1641.5,489.4 1642.5,487.3 1642.5,478.0 1642.5,514.7 1642.5,486.2 1643.5,500.0 1643.5,474.4 1643.5,500.0 1643.5,480.5 1644.5,482.6 1644.5,473.7 1644.5,500.0 1644.5,500.0 1645.5,486.5 1645.5,479.8 1645.5,507.0 1645.5,486.2 1646.5,496.9 1646.5,476.1 1646.5,506.6 1646.5,506.6 1647.5,479.4 1647.5,479.4 1647.5,503.1 1647.5,489.7 1648.5,483.7 1648.5,473.9 1648.5,514.0 1648.5,514.0 1649.5,489.5 1649.5,477.9 1649.5,499.7 1649.5,493.2 1650.5,479.2 1650.5,473.2 1650.5,507.3 1650.5,503.2 1651.5,476.8 1651.5,476.8 1651.5,503.7 1651.5,496.0 1652.5,499.7 1652.5,476.4 1652.5,503.2 1652.5,484.0 1653.5,481.2 1653.5,470.8 1653.5,512.7 1653.5,501.3 1654.5,480.4 1654.5,476.0 1654.5,522.3 1654.5,490.8 1655.5,486.0 1655.5,475.7 1655.5,513.4 1655.5,478.9 1656.5,495.7 1656.5,472.1 1656.5,506.3 1656.5,483.4 1657.5,492.5 1657.5,472.6 1657.5,538.4 1657.5,486.8 1658.5,482.6 1658.5,474.3 1658.5,505.6 1658.5,479.4 1659.5,496.9 1659.5,472.6 1659.5,504.6 1659.5,488.4 1660.5,500.2 1660.5,479.0 1660.5,509.8 1660.5,479.0 1661.5,491.8 1661.5,475.7 1661.5,520.7 1661.5,497.6 1662.5,494.8 1662.5,472.1 1662.5,506.4 1662.5,479.3 1663.5,494.2 1663.5,477.6 1663.5,509.1 1663.5,482.0 1664.5,504.4 1664.5,471.5 1664.5,504.4 1664.5,481.1 1665.5,498.3 1665.5,476.1 1665.5,507.1 1665.5,501.0 1666.5,485.3 1666.5,470.4 1666.5,498.4 1666.5,480.4 1667.5,477.7 1667.5,475.0 1667.5,497.2 1667.5,496.9 1668.5,489.9 1668.5,475.2 1668.5,513.7 1668.5,475.2 1669.5,489.4 1669.5,480.2 1669.5,505.1 1669.5,483.7 1670.5,499.7 1670.5,472.1 1670.5,530.0 1670.5,489.0 1671.5,481.8 1671.5,479.8 1671.5,515.4 1671.5,504.6 1672.5,481.3 1672.5,473.5 1672.5,497.6 1672.5,484.1 1673.5,487.0 1673.5,480.2 1673.5,513.5 1673.5,489.5 1674.5,479.5 1674.5,478.1 1674.5,514.7 1674.5,488.2 1675.5,511.9 1675.5,477.9 1675.5,511.9 1675.5,491.0 1676.5,484.7 1676.5,475.6 1676.5,503.8 1676.5,491.6 1677.5,493.4 1677.5,470.3 1677.5,503.9 1677.5,484.5 1678.5,486.6 1678.5,479.8 1678.5,498.8 1678.5,487.9 1679.5,493.1 1679.5,472.7 1679.5,507.5 1679.5,491.3 1680.5,486.4 1680.5,474.2 1680.5,507.2 1680.5,500.5 1681.5,494.4 1681.5,478.8 1681.5,508.0 1681.5,508.0 1682.5,498.9 1682.5,477.7 1682.5,509.7 1682.5,479.5 1683.5,484.0 1683.5,480.7 1683.5,506.0 1683.5,484.6 1684.5,492.9 1684.5,478.1 1684.5,528.2 1684.5,480.8 1685.5,480.5 1685.5,473.6 1685.5,502.7 1685.5,489.8 1686.5,487.6 1686.5,476.5 1686.5,513.8 1686.5,487.4 1687.5,485.1 1687.5,478.8 1687.5,504.9 1687.5,484.0 1688.5,501.0 1688.5,472.0 1688.5,512.8 1688.5,478.6 1689.5,495.0 1689.5,477.8 1689.5,510.7 1689.5,479.9 1690.5,493.2 1690.5,477.1 1690.5,504.9 1690.5,498.5 1691.5,490.3 1691.5,475.6 1691.5,504.6 1691.5,497.6 1692.5,483.5 1692.5,473.6 1692.5,506.1 1692.5,473.6 1693.5,483.2 1693.5,473.0 1693.5,510.2 1693.5,477.6 1694.5,490.8 1694.5,475.1 1694.5,517.3 1694.5,494.3 1695.5,488.7 1695.5,473.5 1695.5,499.8 1695.5,483.0 1696.5,484.8 1696.5,474.9 1696.5,506.0 1696.5,478.9 1697.5,482.9 1697.5,470.5 1697.5,535.7 1697.5,479.4 1698.5,489.3 1698.5,474.9 1698.5,510.7 1698.5,504.0 1699.5,488.7 1699.5,473.6 1699.5,533.7 1699.5,491.7 1700.5,489.1 1700.5,480.6 1700.5,515.5 1700.5,489.2 1701.5,479.0 1701.5,478.9 1701.5,505.5 1701.5,490.3 1702.5,479.5 1702.5,475.6 1702.5,529.3 1702.5,486.5 1703.5,487.2 1703.5,473.4 1703.5,510.5 1703.5,477.0 1704.5,479.8 1704.5,469.6 1704.5,512.3 1704.5,499.6 1705.5,492.2 1705.5,475.8 1705.5,513.4 1705.5,479.4 1706.5,485.5 1706.5,475.2 1706.5,523.5 1706.5,483.3 1707.5,493.7 1707.5,471.9 1707.5,507.5 1707.5,482.9 1708.5,494.1 1708.5,476.1 1708.5,515.3 1708.5,491.2 1709.5,482.2 1709.5,475.1 1709.5,517.2 1709.5,480.6 1710.5,482.9 1710.5,472.8 1710.5,509.1 1710.5,472.8 1711.5,493.7 1711.5,476.3 1711.5,507.2 1711.5,480.3 1712.5,483.3 1712.5,474.1 1712.5,508.1 1712.5,491.0 1713.5,489.2 1713.5,479.6 1713.5,507.5 1713.5,487.0 1714.5,497.0 1714.5,476.3 1714.5,500.4 1714.5,499.3 1715.5,494.9 1715.5,471.9 1715.5,515.3 1715.5,500.8 1716.5,496.6 1716.5,476.6 1716.5,511.1 1716.5,476.6 1717.5,475.4 1717.5,475.4 1717.5,506.8 1717.5,501.1 1718.5,493.9 1718.5,473.9 1718.5,504.6 1718.5,478.9 1719.5,485.6 1719.5,467.6 1719.5,510.0 1719.5,489.4 1720.5,467.6 1720.5,466.9 1720.5,498.5 1720.5,479.0 1721.5,480.3 1721.5,467.3 1721.5,509.1 1721.5,487.9 1722.5,489.3 1722.5,475.2 1722.5,500.4 1722.5,478.9 1723.5,489.4 1723.5,468.8 1723.5,507.0 1723.5,499.2 1724.5,493.2 1724.5,477.2 1724.5,523.2 1724.5,497.3 1725.5,482.5 1725.5,467.1 1725.5,510.2 1725.5,483.6 1726.5,505.4 1726.5,471.0 1726.5,507.5 1726.5,483.7 1727.5,501.5 1727.5,475.5 1727.5,510.0 1727.5,497.9 1728.5,504.5 1728.5,475.5 1728.5,526.9 1728.5,487.1 1729.5,495.4 1729.5,479.5 1729.5,523.3 1729.5,513.7 1730.5,480.3 1730.5,475.9 1730.5,506.9 1730.5,500.2 1731.5,505.7 1731.5,470.0 1731.5,526.8 1731.5,479.6 1732.5,497.0 1732.5,474.6 1732.5,501.2 1732.5,482.7 1733.5,489.0 1733.5,473.6 1733.5,514.1 1733.5,499.2 1734.5,492.6 1734.5,472.3 1734.5,504.9 1734.5,472.3 1735.5,472.3 1735.5,471.6 1735.5,506.6 1735.5,492.0 1736.5,500.5 1736.5,462.1 1736.5,500.5 1736.5,479.3 1737.5,487.2 1737.5,459.1 1737.5,519.1 1737.5,481.3 1738.5,476.0 1738.5,446.6 1738.5,476.0 1738.5,460.3 1739.5,452.6 1739.5,452.1 1739.5,482.2 1739.5,465.7 1740.5,457.3 1740.5,457.3 1740.5,484.9 1740.5,479.5 1741.5,484.0 1741.5,464.5 1741.5,493.8 1741.5,474.6 1742.5,488.4 1742.5,473.4 1742.5,507.0 1742.5,479.1 1743.5,490.1 1743.5,470.8 1743.5,500.0 1743.5,477.6 1744.5,504.4 1744.5,473.3 1744.5,514.7 1744.5,491.5 1745.5,487.2 1745.5,474.8 1745.5,509.6 1745.5,490.1 1746.5,486.5 1746.5,470.9 1746.5,507.8 1746.5,478.1 1747.5,489.1 1747.5,471.7 1747.5,506.5 1747.5,492.9 1748.5,491.7 1748.5,475.1 1748.5,506.3 1748.5,491.7 1749.5,497.6 1749.5,473.4 1749.5,506.5 1749.5,473.4 1750.5,487.9 1750.5,475.0 1750.5,500.9 1750.5,475.3 1751.5,490.8 1751.5,473.5 1751.5,516.0 1751.5,488.4 1752.5,479.5 1752.5,464.3 1752.5,505.3 1752.5,473.9 1753.5,477.7 1753.5,460.1 1753.5,487.9 1753.5,467.5 1754.5,458.4 1754.5,442.7 1754.5,475.2 1754.5,444.2 1755.5,454.8 1755.5,432.9 1755.5,489.7 1755.5,452.4 1756.5,440.9 1756.5,438.1 1756.5,473.9 1756.5,469.4 1757.5,451.4 1757.5,444.9 1757.5,493.3 1757.5,478.4 1758.5,475.9 1758.5,455.6 1758.5,512.3 1758.5,470.9 1759.5,485.0 1759.5,470.1 1759.5,507.8 1759.5,490.7 1760.5,484.3 1760.5,472.2 1760.5,507.2 1760.5,485.2 1761.5,492.3 1761.5,472.1 1761.5,511.5 1761.5,491.3 1762.5,508.1 1762.5,477.2 1762.5,516.5 1762.5,498.6 1763.5,490.3 1763.5,473.1 1763.5,508.0 1763.5,489.8 1764.5,487.3 1764.5,472.5 1764.5,536.2 1764.5,493.0 1765.5,487.8 1765.5,470.9 1765.5,521.3 1765.5,482.2 1766.5,481.1 1766.5,471.7 1766.5,514.8 1766.5,471.7 1767.5,475.4 1767.5,466.5 1767.5,502.0 1767.5,466.5 1768.5,465.3 1768.5,455.5 1768.5,500.3 1768.5,464.9 1769.5,466.3 1769.5,448.3 1769.5,490.3 1769.5,451.6 1770.5,451.6 1770.5,429.5 1770.5,483.2 1770.5,429.5 1771.5,437.7 1771.5,423.7 1771.5,460.2 1771.5,435.6 1772.5,438.9 1772.5,426.4 1772.5,472.3 1772.5,472.3 1773.5,454.5 1773.5,445.7 1773.5,488.2 1773.5,459.5 1774.5,473.2 1774.5,458.0 1774.5,490.5 1774.5,487.9 1775.5,490.3 1775.5,461.9 1775.5,495.5 1775.5,477.1 1776.5,476.6 1776.5,472.0 1776.5,502.0 1776.5,489.9 1777.5,506.0 1777.5,471.0 1777.5,517.7 1777.5,492.3 1778.5,482.5 1778.5,474.8 1778.5,508.9 1778.5,491.0 1779.5,485.8 1779.5,473.5 1779.5,506.0 1779.5,496.8 1780.5,479.4 1780.5,472.2 1780.5,509.7 1780.5,485.7 1781.5,497.1 1781.5,471.4 1781.5,515.1 1781.5,471.4 1782.5,513.1 1782.5,462.3 1782.5,513.1 1782.5,467.6 1783.5,469.2 1783.5,450.9 1783.5,485.3 1783.5,452.8 1784.5,459.6 1784.5,436.9 1784.5,472.8 1784.5,442.2 1785.5,443.1 1785.5,423.5 1785.5,474.1 1785.5,443.7 1786.5,422.0 1786.5,409.7 1786.5,441.6 1786.5,432.9 1787.5,449.7 1787.5,417.0 1787.5,457.5 1787.5,444.3 1788.5,449.9 1788.5,434.6 1788.5,477.6 1788.5,454.0 1789.5,450.3 1789.5,447.8 1789.5,499.6 1789.5,468.7 1790.5,466.3 1790.5,460.4 1790.5,494.7 1790.5,484.1 1791.5,473.5 1791.5,470.2 1791.5,512.4 1791.5,479.2 1792.5,506.0 1792.5,468.8 1792.5,514.8 1792.5,491.3 1793.5,492.5 1793.5,472.4 1793.5,510.0 1793.5,495.1 1794.5,485.1 1794.5,475.2 1794.5,510.9 1794.5,477.2 1795.5,497.9 1795.5,475.0 1795.5,517.9 1795.5,475.0 1796.5,488.8 1796.5,465.9 1796.5,502.2 1796.5,469.2 1797.5,472.4 1797.5,455.1 1797.5,495.6 1797.5,472.1 1798.5,462.5 1798.5,442.6 1798.5,484.6 1798.5,451.8 1799.5,452.1 1799.5,428.2 1799.5,463.1 1799.5,431.3 1800.5,440.2 1800.5,418.6 1800.5,463.5 1800.5,447.2 1801.5,430.6 1801.5,427.1 1801.5,470.6 1801.5,446.5 1802.5,458.6 1802.5,438.2 1802.5,490.5 1802.5,465.0 1803.5,463.4 1803.5,447.9 1803.5,491.2 1803.5,467.0 1804.5,476.0 1804.5,465.1 1804.5,511.1 1804.5,486.4 1805.5,479.3 1805.5,469.6 1805.5,510.8 1805.5,485.4 1806.5,487.4 1806.5,474.9 1806.5,510.3 1806.5,474.9 1807.5,474.2 1807.5,472.1 1807.5,527.1 1807.5,476.1 1808.5,486.0 1808.5,471.1 1808.5,525.0 1808.5,485.9 1809.5,491.6 1809.5,473.6 1809.5,522.3 1809.5,494.7 1810.5,486.5 1810.5,467.3 1810.5,513.1 1810.5,477.4 1811.5,483.1 1811.5,457.4 1811.5,489.9 1811.5,459.8 1812.5,465.5 1812.5,439.8 1812.5,485.9 1812.5,448.9 1813.5,445.8 1813.5,425.7 1813.5,463.0 1813.5,430.8 1814.5,444.7 1814.5,437.6 1814.5,486.1 1814.5,470.0 1815.5,459.6 1815.5,443.1 1815.5,493.0 1815.5,462.0 1816.5,468.8 1816.5,461.3 1816.5,497.0 1816.5,474.1 1817.5,476.0 1817.5,474.9 1817.5,500.2 1817.5,480.6 1818.5,487.6 1818.5,474.4 1818.5,520.8 1818.5,474.4 1819.5,501.9 1819.5,476.1 1819.5,527.5 1819.5,485.9 1820.5,484.6 1820.5,470.5 1820.5,509.1 1820.5,489.5 1821.5,486.2 1821.5,475.1 1821.5,509.9 1821.5,488.8 1822.5,477.9 1822.5,475.0 1822.5,518.3 1822.5,494.2 1823.5,485.5 1823.5,474.0 1823.5,524.4 1823.5,483.0 1824.5,482.1 1824.5,466.8 1824.5,502.8 1824.5,485.6 1825.5,460.1 1825.5,455.2 1825.5,494.3 1825.5,469.2 1826.5,464.4 1826.5,453.5 1826.5,498.0 1826.5,469.5 1827.5,479.5 1827.5,467.4 1827.5,512.3 1827.5,484.5 1828.5,488.3 1828.5,474.1 1828.5,515.4 1828.5,486.5 1829.5,494.8 1829.5,476.4 1829.5,512.1 1829.5,499.3 1830.5,488.8 1830.5,474.0 1830.5,505.6 1830.5,478.5 1831.5,476.7 1831.5,475.0 1831.5,509.7 1831.5,500.4 1832.5,491.8 1832.5,475.9 1832.5,518.4 1832.5,507.1 1833.5,482.5 1833.5,474.2 1833.5,516.4 1833.5,497.8 1834.5,484.2 1834.5,473.0 1834.5,506.9 1834.5,494.5 1835.5,483.6 1835.5,469.5 1835.5,519.6 1835.5,482.1 1836.5,520.8 1836.5,469.6 1836.5,520.8 1836.5,487.9 1837.5,481.2 1837.5,459.0 1837.5,499.2 1837.5,477.3 1838.5,468.9 1838.5,462.8 1838.5,507.6 1838.5,483.1 1839.5,484.6 1839.5,468.8 1839.5,501.2 1839.5,500.8 1840.5,493.2 1840.5,468.0 1840.5,504.5 1840.5,496.1 1841.5,484.0 1841.5,476.3 1841.5,514.7 1841.5,484.4 1842.5,491.2 1842.5,468.8 1842.5,527.3 1842.5,482.2 1843.5,514.0 1843.5,471.3 1843.5,514.0 1843.5,487.5 1844.5,474.3 1844.5,471.6 1844.5,527.3 1844.5,501.4 1845.5,483.4 1845.5,471.4 1845.5,510.1 1845.5,492.7 1846.5,483.3 1846.5,474.1 1846.5,517.1 1846.5,492.0 1847.5,487.0 1847.5,469.0 1847.5,510.2 1847.5,484.7 1848.5,489.4 1848.5,457.6 1848.5,500.1 1848.5,470.2 1849.5,505.5 1849.5,460.5 1849.5,507.9 1849.5,476.1 1850.5,488.8 1850.5,469.9 1850.5,507.0 1850.5,486.8 1851.5,472.4 1851.5,472.4 1851.5,507.5 1851.5,480.6 1852.5,482.8 1852.5,475.6 1852.5,514.5 1852.5,476.4 1853.5,488.5 1853.5,476.5 1853.5,515.5 1853.5,483.3 1854.5,492.8 1854.5,474.6 1854.5,512.5 1854.5,495.5 1855.5,499.3 1855.5,469.2 1855.5,513.4 1855.5,501.9 1856.5,494.3 1856.5,474.9 1856.5,511.6 1856.5,479.8 1857.5,482.6 1857.5,474.1 1857.5,510.3 1857.5,499.3 1858.5,471.6 1858.5,471.6 1858.5,505.6 1858.5,497.6 1859.5,481.7 1859.5,467.5 1859.5,513.0 1859.5,494.3 1860.5,469.7 1860.5,467.5 1860.5,500.7 1860.5,477.9 1861.5,493.7 1861.5,475.0 1861.5,506.2 1861.5,481.6 1862.5,521.4 1862.5,475.5 1862.5,521.4 1862.5,487.5 1863.5,492.8 1863.5,471.9 1863.5,504.0 1863.5,486.3 1864.5,483.1 1864.5,472.8 1864.5,515.1 1864.5,487.7 1865.5,500.5 1865.5,470.0 1865.5,507.8 1865.5,481.1 1866.5,477.8 1866.5,473.7 1866.5,522.2 1866.5,479.1 1867.5,483.6 1867.5,471.6 1867.5,524.4 1867.5,484.7 1868.5,487.7 1868.5,473.1 1868.5,514.3 1868.5,494.9 1869.5,479.7 1869.5,474.8 1869.5,509.2 1869.5,479.5 1870.5,481.8 1870.5,472.1 1870.5,513.8 1870.5,492.2 1871.5,492.5 1871.5,477.4 1871.5,511.6 1871.5,486.8 1872.5,502.7 1872.5,473.8 1872.5,517.4 1872.5,492.1 1873.5,488.9 1873.5,471.2 1873.5,514.6 1873.5,484.5 1874.5,510.7 1874.5,475.2 1874.5,514.8 1874.5,489.9 1875.5,484.4 1875.5,474.7 1875.5,518.4 1875.5,505.2 1876.5,484.6 1876.5,471.8 1876.5,516.4 1876.5,484.2 1877.5,494.7 1877.5,473.4 1877.5,518.4 1877.5,487.5 1878.5,482.5 1878.5,473.4 1878.5,512.8 1878.5,487.1 1879.5,494.4 1879.5,475.2 1879.5,516.8 1879.5,497.0" fill="none" stroke="#1cf628" stroke-width="1.3" stroke-linejoin="round"/><path d="M1148.8 478L1149.2 231.5L1150.4 386L1151.3 478" fill="none" stroke="#7cec98" stroke-width="1.5"/><path d="M1308.8 480V388 M1401.6 482V392" fill="none" stroke="#5ce47c" stroke-width="1.5"/><path d="M1233 490H1249 M1241 482V498" stroke="#e8e8f8" stroke-width="1.2"/></svg>
<span id="t24" class="t" style="left:17px;top:674.688px;font-size:11px;line-height:11px;color:#444;letter-spacing:-0.344px;">X</span>
<div style="left:32px;top:670px;width:68px;height:21px;background:#000;border:1px solid;border-color:#6a6a6a #fff #fff #6a6a6a;"></div>
<span id="t25" class="t" style="left:37px;top:675.188px;font-size:11px;line-height:11px;color:#e8e8e8;letter-spacing:0.033px;">1476.56</span>
<div style="left:104px;top:670px;width:73px;height:21px;background:#fff;border:1px solid;border-color:#6a6a6a #e8e8e8 #e8e8e8 #6a6a6a;"></div>
<span id="t26" class="t" style="left:108px;top:675.188px;font-size:11px;line-height:11px;color:#222;letter-spacing:-0.227px;">Hz</span>
<div style="left:160px;top:672px;width:15px;height:17px;background:#efefef;border:1px solid;border-color:#fff #6a6a6a #6a6a6a #fff;"></div>
<svg class="i" style="left:163px;top:678px;" width="9" height="6" viewBox="0 0 9 6"><path d="M1 1H8L4.5 5Z" fill="#000"/></svg>
<span id="t27" class="t" style="left:182px;top:674.688px;font-size:11px;line-height:11px;color:#444;letter-spacing:0.656px;">Y</span>
<div style="left:196px;top:670px;width:68px;height:21px;background:#000;border:1px solid;border-color:#6a6a6a #fff #fff #6a6a6a;"></div>
<span id="t28" class="t" style="left:201px;top:675.188px;font-size:11px;line-height:11px;color:#e8e8e8;letter-spacing:0.241px;">-107.91</span>
<div style="left:268px;top:670px;width:73px;height:21px;background:#fff;border:1px solid;border-color:#6a6a6a #e8e8e8 #e8e8e8 #6a6a6a;"></div>
<span id="t29" class="t" style="left:272px;top:675.188px;font-size:11px;line-height:11px;color:#222;letter-spacing:-0.129px;">dBFS</span>
<div style="left:324px;top:672px;width:15px;height:17px;background:#efefef;border:1px solid;border-color:#fff #6a6a6a #6a6a6a #fff;"></div>
<svg class="i" style="left:327px;top:678px;" width="9" height="6" viewBox="0 0 9 6"><path d="M1 1H8L4.5 5Z" fill="#000"/></svg>
<div style="left:346px;top:668px;width:1px;height:25px;background:#c0c0c0;"></div>
<div style="left:352px;top:675px;width:11px;height:11px;background:#fff;border:1px solid;border-color:#6a6a6a #e0e0e0 #e0e0e0 #6a6a6a;"></div>
<span id="t30" class="t" style="left:369px;top:675.688px;font-size:11px;line-height:11px;color:#222;letter-spacing:0.156px;">Relative</span>
<svg class="i" style="left:9px;top:50px;" width="16" height="16" viewBox="0 0 16 16"><path d="M1.5 14V5.5H5L6.5 7H11.5V9" fill="#e8e8a0" stroke="#5a5a10" stroke-width="1"/><path d="M1.5 14L4.5 8.5H15L12 14Z" fill="#a8a838" stroke="#4a4a08" stroke-width="1"/><path d="M9.5 3.5C11 1.5 13.5 1.5 14.5 4M14.8 1.5V4.3H12" stroke="#222" stroke-width="1" fill="none"/></svg>
<svg class="i" style="left:32px;top:56px;" width="9" height="6" viewBox="0 0 9 6"><path d="M0.5 0.5H8.5L4.5 5Z" fill="#111"/></svg>
<svg class="i" style="left:47px;top:50px;" width="16" height="16" viewBox="0 0 16 16"><rect x="1" y="1" width="14" height="14" fill="#20200c"/><rect x="4" y="1.5" width="8" height="6" fill="#f4f4f0"/><rect x="9.5" y="2" width="2" height="4" fill="#60602a"/><rect x="3.5" y="10" width="9" height="5" fill="#3a3a14"/><rect x="5" y="11" width="2.5" height="3.5" fill="#d8d8c8"/><path d="M1.5 1.5V14.5" stroke="#7c7c38"/></svg>
<svg class="i" style="left:70px;top:50px;" width="16" height="16" viewBox="0 0 16 16"><rect x="1" y="1" width="14.5" height="14.5" fill="#b4b848" stroke="#26260a" stroke-width="1.6"/><path d="M4 12.5V8.5H8V5H12.5" stroke="#eef09a" stroke-width="2.2" fill="none"/><path d="M7 7.5H9.5V10.5H13" stroke="#1a1a08" stroke-width="1.4" fill="none"/><rect x="10" y="1.5" width="5" height="3.5" fill="#2a2a0c"/></svg>
<div style="left:93px;top:47px;width:1px;height:24px;background:#d0d0d0;"></div>
<div style="left:94px;top:47px;width:1px;height:24px;background:#fafafa;"></div>
<svg class="i" style="left:101px;top:50px;" width="16" height="16" viewBox="0 0 16 16"><rect x="0.5" y="2" width="15" height="7" fill="#1c5a4c"/><text x="8" y="8" font-size="5.5" font-weight="700" fill="#bfe8d8" text-anchor="middle">1.00</text><text x="8" y="14.6" font-size="5.2" font-weight="700" fill="#222" text-anchor="middle">OUT</text></svg>
<svg class="i" style="left:124px;top:50px;" width="16" height="16" viewBox="0 0 16 16"><path d="M1 3.5H9 M1 7.5H9 M3 2L7 9 M7 2L3 9" stroke="#333" stroke-width="1" fill="none"/><path d="M9 1.5L15 5.5L9 9.5Z" fill="#fff" stroke="#333" stroke-width="1"/><text x="8" y="14.6" font-size="5.2" font-weight="700" fill="#222" text-anchor="middle">OUT</text></svg>
<svg class="i" style="left:147px;top:50px;" width="16" height="16" viewBox="0 0 16 16"><path d="M1.5 9.5A6.5 6.5 0 0 1 14.5 9.5Z" fill="#eef0fa" stroke="#444c60" stroke-width="1.3"/><path d="M8 9L11 4" stroke="#444" stroke-width="1"/><path d="M4 6l1 1M8 3.2v1.3M12 6l-1 1" stroke="#667" stroke-width=".8"/><text x="8" y="14.6" font-size="5.2" font-weight="700" fill="#222" text-anchor="middle">OUT</text></svg>
<svg class="i" style="left:170px;top:50px;" width="16" height="16" viewBox="0 0 16 16"><path d="M1 6L6 2V4.5H11V2.5H15V8.5H11V7.5H6V10Z" fill="#8a9a2a" stroke="#4a5a10" stroke-width=".8"/><path d="M11 2.5V8.5M12 5.5H15" stroke="#2a3408" stroke-width="1"/><text x="8" y="14.6" font-size="5.2" font-weight="700" fill="#223" text-anchor="middle">OUT</text></svg>
<div style="left:192px;top:47px;width:1px;height:24px;background:#d0d0d0;"></div>
<div style="left:193px;top:47px;width:1px;height:24px;background:#fafafa;"></div>
<svg class="i" style="left:200px;top:50px;" width="16" height="16" viewBox="0 0 16 16"><rect x="0.5" y="2" width="15" height="7.5" fill="#4a0a1c"/><path d="M3 3V9M6 3V9M9.5 3V9M12.5 3V9" stroke="#d88" stroke-width="1"/><path d="M1 5.5H15" stroke="#e8a0a8" stroke-width="1"/><text x="8" y="14.6" font-size="5.2" font-weight="700" fill="#802030" text-anchor="middle">OUT</text></svg>
<svg class="i" style="left:223px;top:50px;" width="16" height="16" viewBox="0 0 16 16"><path d="M1.5 9.5A6.5 6.5 0 0 1 14.5 9.5Z" fill="#f8c8d0" stroke="#b02038" stroke-width="1.5"/><path d="M3 4L13 9M13 4L3 9" stroke="#c01830" stroke-width="1.3"/><text x="8" y="14.6" font-size="5.2" font-weight="700" fill="#802030" text-anchor="middle">OUT</text></svg>
<svg class="i" style="left:246px;top:50px;" width="16" height="16" viewBox="0 0 16 16"><path d="M2 2L14 14M14 2L2 14M8 1V15M1 8H15" stroke="#d05818" stroke-width="1.6"/><path d="M4 4L12 12M12 4L4 12" stroke="#902010" stroke-width="2.2"/><circle cx="8" cy="8" r="2.3" fill="#f0b040"/><path d="M6 9.5l4-3" stroke="#501008" stroke-width="1.2"/></svg>
<div style="left:270px;top:47px;width:1px;height:24px;background:#d0d0d0;"></div>
<div style="left:271px;top:47px;width:1px;height:24px;background:#fafafa;"></div>
<svg class="i" style="left:277px;top:50px;" width="16" height="16" viewBox="0 0 16 16"><rect x="0.5" y="2" width="15" height="7" fill="#146050"/><text x="8" y="8" font-size="5.5" font-weight="700" fill="#c8f0e0" text-anchor="middle">1.00</text><text x="8" y="14.8" font-size="5.2" font-weight="700" fill="#113" text-anchor="middle">IN</text></svg>
<svg class="i" style="left:300px;top:50px;" width="16" height="16" viewBox="0 0 16 16"><path d="M1 3.5H9 M1 7.5H9 M3 2L7 9 M7 2L3 9" stroke="#333" stroke-width="1" fill="none"/><path d="M9 1.5L15 5.5L9 9.5Z" fill="#fff" stroke="#333" stroke-width="1"/><text x="8" y="14.8" font-size="5.2" font-weight="700" fill="#223" text-anchor="middle">IN</text></svg>
<svg class="i" style="left:323px;top:50px;" width="16" height="16" viewBox="0 0 16 16"><path d="M1.5 9.5A6.5 6.5 0 0 1 14.5 9.5Z" fill="#eef0fa" stroke="#444c60" stroke-width="1.3"/><path d="M8 9L11 4" stroke="#444" stroke-width="1"/><path d="M4 6l1 1M8 3.2v1.3M12 6l-1 1" stroke="#667" stroke-width=".8"/><text x="8" y="14.8" font-size="5.2" font-weight="700" fill="#334" text-anchor="middle">IN</text></svg>
<svg class="i" style="left:346px;top:50px;" width="16" height="16" viewBox="0 0 16 16"><path d="M1 6L6 2V4.5H11V2.5H15V8.5H11V7.5H6V10Z" fill="#8a9a2a" stroke="#4a5a10" stroke-width=".8"/><path d="M11 2.5V8.5M12 5.5H15" stroke="#2a3408" stroke-width="1"/><text x="8" y="14.8" font-size="5.2" font-weight="700" fill="#224" text-anchor="middle">IN</text></svg>
<div style="left:369px;top:47px;width:1px;height:24px;background:#d0d0d0;"></div>
<div style="left:370px;top:47px;width:1px;height:24px;background:#fafafa;"></div>
<svg class="i" style="left:375px;top:50px;" width="16" height="16" viewBox="0 0 16 16"><path d="M3 3L13 13M13 3L3 13" stroke="#e02828" stroke-width="2.2"/><path d="M1.5 5V1.5H5M11 1.5H14.5V5M14.5 11V14.5H11M5 14.5H1.5V11" stroke="#d03030" stroke-width="1.3" fill="none"/><circle cx="8" cy="8" r="1.8" fill="#fff" stroke="#a02020" stroke-width=".8"/></svg>
<div style="left:399px;top:47px;width:1px;height:24px;background:#d0d0d0;"></div>
<div style="left:400px;top:47px;width:1px;height:24px;background:#fafafa;"></div>
<svg class="i" style="left:407px;top:50px;" width="16" height="16" viewBox="0 0 16 16"><path d="M1 11L4.5 2L8 11M8.5 11L12 2L15 10" stroke="#3a48c0" stroke-width="1.4" fill="none"/><path d="M3 13H13" stroke="#111" stroke-width="1.5"/><path d="M12 10.5L15.5 13L12 15.5Z" fill="#111"/></svg>
<svg class="i" style="left:430px;top:50px;" width="16" height="16" viewBox="0 0 16 16"><path d="M1 3L6 11L8 6L10 11L15 3" stroke="#d82838" stroke-width="1.8" fill="none"/><path d="M2 13H14" stroke="#b01828" stroke-width="2"/><path d="M1 11l3 3M15 11l-3 3" stroke="#d82838" stroke-width="1.3"/></svg>
<svg class="i" style="left:453px;top:50px;" width="16" height="16" viewBox="0 0 16 16"><path d="M1 11L4.5 2L8 11M8.5 11L12 2L15 10" stroke="#d6d6d6" stroke-width="1.4" fill="none"/><path d="M3 13H13" stroke="#cfcfcf" stroke-width="1.5"/><path d="M12 10.5L15.5 13L12 15.5Z" fill="#cccccc"/></svg>
<div style="left:476px;top:47px;width:1px;height:24px;background:#d0d0d0;"></div>
<div style="left:477px;top:47px;width:1px;height:24px;background:#fafafa;"></div>
<svg class="i" style="left:484px;top:50px;" width="16" height="16" viewBox="0 0 16 16"><rect x="0.5" y="2" width="15" height="7" fill="#0c4c34"/><text x="8" y="8" font-size="5.5" font-weight="700" fill="#d8f8e8" text-anchor="middle">1.00</text><circle cx="3" cy="12.5" r="1.5" fill="#111"/><path d="M6 12.5H12M10 10.5l2.5 2-2.5 2" stroke="#111" stroke-width="1" fill="none"/></svg>
<div style="left:503px;top:46px;width:24px;height:25px;background:#f3f3f3;border:1px solid;border-color:#9c9c9c #fcfcfc #fcfcfc #9c9c9c;"></div>
<svg class="i" style="left:508px;top:51px;" width="16" height="16" viewBox="0 0 16 16"><path d="M1.5 9.5A6.5 6.5 0 0 1 14.5 9.5Z" fill="#eef0fa" stroke="#444c60" stroke-width="1.3"/><path d="M8 9L11 4" stroke="#444" stroke-width="1"/><path d="M4 6l1 1M8 3.2v1.3M12 6l-1 1" stroke="#667" stroke-width=".8"/><circle cx="3" cy="13" r="1.4" fill="#111"/><path d="M6 13H12" stroke="#111" stroke-width="1"/></svg>
<svg class="i" style="left:530px;top:50px;" width="16" height="16" viewBox="0 0 16 16"><path d="M1 6L6 2V4.5H11V2.5H15V8.5H11V7.5H6V10Z" fill="#8a9a2a" stroke="#4a5a10" stroke-width=".8"/><path d="M11 2.5V8.5M12 5.5H15" stroke="#2a3408" stroke-width="1"/><circle cx="3" cy="13" r="1.4" fill="#111"/><path d="M6 13H12M9 11V15" stroke="#224" stroke-width="1"/></svg>
<div style="left:553px;top:47px;width:1px;height:24px;background:#d0d0d0;"></div>
<div style="left:554px;top:47px;width:1px;height:24px;background:#fafafa;"></div>
<svg class="i" style="left:561px;top:50px;" width="16" height="16" viewBox="0 0 16 16"><text x="12" y="7.3" font-size="8.6" font-weight="700" fill="#0a0a0a" stroke="#0a0a0a" stroke-width=".5" text-anchor="middle">A</text><text x="12" y="15.2" font-size="8.6" font-weight="700" fill="#0a0a0a" stroke="#0a0a0a" stroke-width=".5" text-anchor="middle">B</text><circle cx="4" cy="4" r="2.3" fill="#fff" stroke="#333"/><circle cx="4" cy="4" r="1.5" fill="#111"/><path d="M1.8 11.5A2.3 2.3 0 0 1 6.2 11.5" fill="none" stroke="#444"/></svg>
<svg class="i" style="left:584px;top:50px;" width="16" height="16" viewBox="0 0 16 16"><text x="12" y="7.3" font-size="8.6" font-weight="700" fill="#0a0a0a" stroke="#0a0a0a" stroke-width=".5" text-anchor="middle">A</text><text x="12" y="15.2" font-size="8.6" font-weight="700" fill="#0a0a0a" stroke="#0a0a0a" stroke-width=".5" text-anchor="middle">B</text><path d="M1.8 5.5A2.3 2.3 0 0 1 6.2 3" fill="none" stroke="#444"/><circle cx="4" cy="11.5" r="2.3" fill="#fff" stroke="#333"/><circle cx="4" cy="11.5" r="1.5" fill="#111"/></svg>
<div style="left:603px;top:46px;width:24px;height:25px;background:#f3f3f3;border:1px solid;border-color:#9c9c9c #fcfcfc #fcfcfc #9c9c9c;"></div>
<svg class="i" style="left:608px;top:51px;" width="16" height="16" viewBox="0 0 16 16"><text x="12" y="7.3" font-size="8.6" font-weight="700" fill="#0a0a0a" stroke="#0a0a0a" stroke-width=".5" text-anchor="middle">A</text><text x="12" y="15.2" font-size="8.6" font-weight="700" fill="#0a0a0a" stroke="#0a0a0a" stroke-width=".5" text-anchor="middle">B</text><circle cx="4" cy="4" r="2.3" fill="#fff" stroke="#333"/><circle cx="4" cy="4" r="1.5" fill="#111"/><circle cx="4" cy="11.5" r="2.3" fill="#fff" stroke="#333"/><circle cx="4" cy="11.5" r="1.5" fill="#111"/></svg>
<div style="left:631px;top:47px;width:1px;height:24px;background:#d0d0d0;"></div>
<div style="left:632px;top:47px;width:1px;height:24px;background:#fafafa;"></div>
<svg class="i" style="left:638px;top:50px;" width="16" height="16" viewBox="0 0 16 16"><circle cx="8" cy="8.5" r="6.7" fill="#24d83c" stroke="#0c6418" stroke-width="1.4"/><circle cx="6.5" cy="7" r="3" fill="#6cf080" opacity=".6"/></svg>
<svg class="i" style="left:661px;top:50px;" width="16" height="16" viewBox="0 0 16 16"><circle cx="8" cy="8.5" r="6.7" fill="#e81c24" stroke="#7a0c10" stroke-width="1.4"/><circle cx="6.5" cy="7" r="3" fill="#ff6a6a" opacity=".6"/></svg>
<svg class="i" style="left:684px;top:50px;" width="16" height="16" viewBox="0 0 16 16"><path d="M1 12L5 8L8 12L11 7L15 11" stroke="#2a9a58" stroke-width="2.2" fill="none"/><path d="M5 3H12M8.5 1V7M10 5l3 4M12 5l-2 4" stroke="#2838b8" stroke-width="1.2" fill="none"/></svg>
<div style="left:704px;top:46px;width:24px;height:25px;background:#f3f3f3;border:1px solid;border-color:#9c9c9c #fcfcfc #fcfcfc #9c9c9c;"></div>
<svg class="i" style="left:708px;top:51px;" width="16" height="16" viewBox="0 0 16 16"><path d="M1 13.5H15" stroke="#7a1020" stroke-width="2.4"/><path d="M2 12L5 6L7 10" stroke="#c02030" stroke-width="1.6" fill="none"/><path d="M7 3H13M10 1V7M11 5l3 5M13 5l-3 5" stroke="#2838b8" stroke-width="1.2" fill="none"/></svg>
<div style="left:729px;top:47px;width:1px;height:24px;background:#d0d0d0;"></div>
<div style="left:730px;top:47px;width:1px;height:24px;background:#fafafa;"></div>
<svg class="i" style="left:736px;top:50px;" width="16" height="16" viewBox="0 0 16 16"><path d="M1 7C3 1 6 1 8 5S13 9 15 4" stroke="#15584a" stroke-width="2.4" fill="none"/><rect x="1" y="11" width="6" height="3.5" fill="#d8d8d8" stroke="#222" stroke-width=".9"/><rect x="9" y="11" width="6" height="3.5" fill="#d8d8d8" stroke="#222" stroke-width=".9"/></svg>
<svg class="i" style="left:759px;top:50px;" width="16" height="16" viewBox="0 0 16 16"><path d="M1 7C3 1 6 1 8 5S13 9 15 4" stroke="#2c8c3c" stroke-width="2.4" fill="none"/><rect x="1" y="11" width="6" height="3.5" fill="#d8d8d8" stroke="#222" stroke-width=".9"/><rect x="9" y="11" width="6" height="3.5" fill="#d8d8d8" stroke="#222" stroke-width=".9"/></svg>
<svg class="i" style="left:782px;top:50px;" width="16" height="16" viewBox="0 0 16 16"><path d="M1 9H15V6L12 7L10 3L8 1L6 4L4 6L1 5Z" fill="#b01828"/><path d="M1 9.3H15" stroke="#5a0c14" stroke-width="1"/><rect x="1" y="11" width="6" height="3.5" fill="#d8d8d8" stroke="#222" stroke-width=".9"/><rect x="9" y="11" width="6" height="3.5" fill="#d8d8d8" stroke="#222" stroke-width=".9"/></svg>
<svg class="i" style="left:805px;top:50px;" width="16" height="16" viewBox="0 0 16 16"><path d="M1 8.5H15" stroke="#2c8c3c" stroke-width="1.6"/><path d="M5.5 0.5V9" stroke="#2c8c3c" stroke-width="1.3"/><path d="M8 9L10 6L12 9" stroke="#2c8c3c" fill="none"/><rect x="1" y="11" width="6" height="3.5" fill="#d8d8d8" stroke="#222" stroke-width=".9"/><rect x="9" y="11" width="6" height="3.5" fill="#d8d8d8" stroke="#222" stroke-width=".9"/></svg>
<svg class="i" style="left:828px;top:50px;" width="16" height="16" viewBox="0 0 16 16"><path d="M1 8H9M5 4V12" stroke="#22a040" stroke-width="2"/><path d="M9 3L15 9M15 3L9 9M10 11H15M10 13.5H15" stroke="#d02828" stroke-width="1.6"/></svg>
<svg class="i" style="left:851px;top:50px;" width="16" height="16" viewBox="0 0 16 16"><rect x="1" y="1" width="14.5" height="14.5" fill="#1c7c3c" stroke="#0c3c24" stroke-width="1.6"/><path d="M3 13L13 3" stroke="#b02828" stroke-width="2.4"/><path d="M3 8L8 13" stroke="#5cb86c" stroke-width="1.4"/></svg>
<div style="left:874px;top:47px;width:1px;height:24px;background:#d0d0d0;"></div>
<div style="left:875px;top:47px;width:1px;height:24px;background:#fafafa;"></div>
<svg class="i" style="left:881px;top:50px;" width="16" height="16" viewBox="0 0 16 16"><path d="M2 14C2 6 6 2 13 3" stroke="#76801c" stroke-width="2.6" fill="none"/><path d="M7 6.5L15 10.5L7 14.5Z" fill="#22b83c" stroke="#0c5a1c" stroke-width=".8"/></svg>
<svg class="i" style="left:904px;top:50px;" width="16" height="16" viewBox="0 0 16 16"><path d="M2 14C2 6 6 2 13 3" stroke="#b8b8b8" stroke-width="2.6" fill="none"/><circle cx="11" cy="11" r="3" fill="none" stroke="#b4b4b4" stroke-width="1.8"/></svg>
<svg class="i" style="left:927px;top:50px;" width="16" height="16" viewBox="0 0 16 16"><path d="M2 13C2 6 5 2 13 2" stroke="#76801c" stroke-width="2.2" fill="none"/><rect x="5.5" y="5.5" width="9.5" height="9.5" fill="#f4f4f4" stroke="#222" stroke-width="1.2"/><path d="M5.5 8.5H15M5.5 11.5H15M9 5.5V15M12 5.5V15" stroke="#222" stroke-width=".9"/><path d="M1 4H15M1 7H5M1 10H5" stroke="#c83838" stroke-width=".7" stroke-dasharray="1 1"/></svg>
<div style="left:951px;top:47px;width:1px;height:24px;background:#d0d0d0;"></div>
<div style="left:952px;top:47px;width:1px;height:24px;background:#fafafa;"></div>
<svg class="i" style="left:958px;top:50px;" width="16" height="16" viewBox="0 0 16 16"><path d="M2.5 1H10L13 4V15H2.5Z" fill="#f4fff0" stroke="#1c4c1c" stroke-width="1.5"/><path d="M5 5H9M5 8H8M5 11H8" stroke="#1c5c1c" stroke-width="1.2"/><path d="M8 7.5L15 10.5L8 14Z" fill="#2cc83c" stroke="#0c6a1c" stroke-width=".7"/></svg>
<svg class="i" style="left:982px;top:56px;" width="9" height="6" viewBox="0 0 9 6"><path d="M0.5 0.5H8.5L4.5 5Z" fill="#111"/></svg>
<div style="left:996px;top:47px;width:1px;height:24px;background:#d0d0d0;"></div>
<div style="left:997px;top:47px;width:1px;height:24px;background:#fafafa;"></div>
<svg class="i" style="left:998px;top:50px;" width="16" height="16" viewBox="0 0 16 16"><path d="M3 1.5H10L12 3.5V8H3Z" fill="#f4f4f4" stroke="#b4b4b4" stroke-width="1.2"/><rect x="1.5" y="7.5" width="13" height="6" rx="1.5" fill="#dcdcdc" stroke="#b0b0b0" stroke-width="1.2"/><circle cx="10" cy="10.5" r="2.6" fill="#ececec" stroke="#b0b0b0" stroke-width="1.2"/></svg>
<svg class="i" style="left:21px;top:145px;" width="16" height="16" viewBox="0 0 16 16"><path d="M1 11L5 6L9 11L14 5" stroke="#1a5a22" stroke-width="3.6" fill="none" stroke-linejoin="round"/><path d="M1 11L5 6L9 11L14 5" stroke="#2c9434" stroke-width="1.8" fill="none" stroke-linejoin="round"/><path d="M9 3.5H15M12 .5V6.5" stroke="#111" stroke-width="1.6"/></svg>
<svg class="i" style="left:43px;top:145px;" width="16" height="16" viewBox="0 0 16 16"><path d="M1 11L5 6L9 11L14 5" stroke="#1a5a22" stroke-width="3.6" fill="none" stroke-linejoin="round"/><path d="M1 11L5 6L9 11L14 5" stroke="#2c9434" stroke-width="1.8" fill="none" stroke-linejoin="round"/><path d="M8 3.5H14" stroke="#111" stroke-width="1.6"/></svg>
<svg class="i" style="left:66px;top:145px;" width="16" height="16" viewBox="0 0 16 16"><rect x="1" y="1" width="14" height="14" fill="#141c10"/><rect x="4" y="2" width="8" height="6" fill="#3c9c44"/><rect x="4" y="10.5" width="8" height="4.5" fill="#2a3a22"/><rect x="5.5" y="11.5" width="2" height="3" fill="#c8e8c8"/><path d="M6 4h4v2h-4z" fill="#b8e8b8"/></svg>
<svg class="i" style="left:89px;top:145px;" width="16" height="16" viewBox="0 0 16 16"><path d="M2 1.5H7L9 3.5V10H2Z" fill="#fff" stroke="#223" stroke-width="1"/><path d="M7 6.5H12L14 8.5V15H7Z" fill="#fff" stroke="#223" stroke-width="1"/><path d="M8.5 10H12.5M8.5 12.5H12.5" stroke="#223" stroke-width=".8"/></svg>
<div style="left:113px;top:143px;width:1px;height:21px;background:#bcbcbc;"></div>
<div style="left:114px;top:143px;width:1px;height:21px;background:#ffffff;"></div>
<div style="left:117px;top:142px;width:24px;height:23px;background:#f9f9f7;border:1px solid;border-color:#8a8a8a #fff #fff #8a8a8a;"></div>
<svg class="i" style="left:121px;top:146px;" width="16" height="16" viewBox="0 0 16 16"><rect x="1" y="1" width="14.5" height="14.5" fill="#289c3c" stroke="#0c3414" stroke-width="1.6"/><path d="M2 2L14.5 14.5" stroke="#f4fff4" stroke-width="2"/><path d="M2 9L8 15" stroke="#8cd898" stroke-width="1.2"/></svg>
<svg class="i" style="left:143px;top:145px;" width="16" height="16" viewBox="0 0 16 16"><rect x="1" y="2" width="14" height="9" fill="#e4f4e4" stroke="#222" stroke-width="1.3"/><path d="M1 6.5H15M8 2V11" stroke="#222" stroke-width="1.1" stroke-dasharray="2 1"/><rect x="9" y="5" width="6" height="4" fill="#2c9434"/><path d="M1 14H15" stroke="#1c6c2c" stroke-width="2" stroke-dasharray="4 1.5"/></svg>
<div style="left:167px;top:143px;width:1px;height:21px;background:#bcbcbc;"></div>
<div style="left:168px;top:143px;width:1px;height:21px;background:#ffffff;"></div>
<svg class="i" style="left:174px;top:145px;" width="16" height="16" viewBox="0 0 16 16"><rect x="1" y="5.5" width="12" height="9.5" fill="#fff" stroke="#222" stroke-width="1.3"/><path d="M1 8.5H13M1 11.5H13M5 5.5V15M9 5.5V15" stroke="#222" stroke-width="1"/><path d="M9 7L14.5 1.5" stroke="#111" stroke-width="2.4"/></svg>
<svg class="i" style="left:197px;top:145px;" width="16" height="16" viewBox="0 0 16 16"><path d="M3 1V15M8 1V15M13 1V15" stroke="#222" stroke-width="1.3" stroke-dasharray="2 1.4"/><path d="M1 13l2 2 2-2M6 13l2 2 2-2M11 13l2 2 2-2" stroke="#222" stroke-width=".9" fill="none"/></svg>
<div style="left:219px;top:143px;width:1px;height:21px;background:#bcbcbc;"></div>
<div style="left:220px;top:143px;width:1px;height:21px;background:#ffffff;"></div>
<svg class="i" style="left:228px;top:145px;" width="16" height="16" viewBox="0 0 16 16"><circle cx="6.5" cy="7" r="3.8" fill="#fff" stroke="#111" stroke-width="1.4"/><path d="M4 10.5L1 14.5" stroke="#111" stroke-width="1.8"/><path d="M1 2H15" stroke="#111" stroke-width="1.2" stroke-dasharray="2 1"/><path d="M1 2l3 3.5M15 2l-3 3.5" stroke="#111" stroke-width="1"/><path d="M11 13H15M13 11V15" stroke="#111" stroke-width="1"/></svg>
<svg class="i" style="left:251px;top:145px;" width="16" height="16" viewBox="0 0 16 16"><circle cx="6.5" cy="7" r="3.8" fill="#fff" stroke="#111" stroke-width="1.4"/><path d="M4 10.5L1 14.5" stroke="#111" stroke-width="1.8"/><path d="M1 2H15" stroke="#111" stroke-width="1.2" stroke-dasharray="2 1"/><path d="M1 2l3 3.5M15 2l-3 3.5" stroke="#111" stroke-width="1"/><path d="M11 13H15" stroke="#111" stroke-width="1.2"/></svg>
<svg class="i" style="left:274px;top:145px;" width="16" height="16" viewBox="0 0 16 16"><path d="M1.5 1V15M14.5 1V15" stroke="#111" stroke-width="1.5"/><path d="M2 3L6 10L9.5 5L14 12" stroke="#2c9434" stroke-width="2.2" fill="none"/></svg>
<div style="left:296px;top:143px;width:1px;height:21px;background:#bcbcbc;"></div>
<div style="left:297px;top:143px;width:1px;height:21px;background:#ffffff;"></div>
<svg class="i" style="left:304px;top:145px;" width="16" height="16" viewBox="0 0 16 16"><path d="M2 1V15" stroke="#111" stroke-width="1.5"/><path d="M2 5L6 2L10 7L14 3" stroke="#1a5a22" stroke-width="3.4" fill="none"/><path d="M2 5L6 2L10 7L14 3" stroke="#2c9434" stroke-width="1.8" fill="none"/><path d="M3 12H9M3 12l3-2.5M3 12l3 2.5" stroke="#111" stroke-width="1.3" fill="none"/></svg>
<svg class="i" style="left:327px;top:145px;" width="16" height="16" viewBox="0 0 16 16"><path d="M2 5L6 2L10 7L14 3" stroke="#1a5a22" stroke-width="3.4" fill="none"/><path d="M2 5L6 2L10 7L14 3" stroke="#2c9434" stroke-width="1.8" fill="none"/><path d="M4 12H12M4 12l3-2.5M4 12l3 2.5" stroke="#111" stroke-width="1.3" fill="none"/></svg>
<svg class="i" style="left:350px;top:145px;" width="16" height="16" viewBox="0 0 16 16"><path d="M2 5L6 2L10 7L14 3" stroke="#1a5a22" stroke-width="3.4" fill="none"/><path d="M2 5L6 2L10 7L14 3" stroke="#2c9434" stroke-width="1.8" fill="none"/><path d="M4 12H12M12 12l-3-2.5M12 12l-3 2.5" stroke="#111" stroke-width="1.3" fill="none"/></svg>
<svg class="i" style="left:373px;top:145px;" width="16" height="16" viewBox="0 0 16 16"><path d="M14 1V15" stroke="#111" stroke-width="1.5"/><path d="M2 5L6 2L10 7L14 3" stroke="#1a5a22" stroke-width="3.4" fill="none"/><path d="M2 5L6 2L10 7L14 3" stroke="#2c9434" stroke-width="1.8" fill="none"/><path d="M6 12H13M13 12l-3-2.5M13 12l-3 2.5" stroke="#111" stroke-width="1.3" fill="none"/></svg>
<div style="left:395px;top:143px;width:1px;height:21px;background:#bcbcbc;"></div>
<div style="left:396px;top:143px;width:1px;height:21px;background:#ffffff;"></div>
<svg class="i" style="left:403px;top:145px;" width="16" height="16" viewBox="0 0 16 16"><circle cx="6" cy="5" r="3" fill="#fff" stroke="#111" stroke-width="1.3"/><path d="M4 8L1 12" stroke="#111" stroke-width="1.6"/><path d="M3 14H10M10 14l-2.5-2M10 14l-2.5 2" stroke="#111" stroke-width="1" fill="none"/><path d="M13.5 1V15M11.5 1H15M11.5 15H15" stroke="#111" stroke-width="1.2" fill="none"/></svg>
<svg class="i" style="left:426px;top:145px;" width="16" height="16" viewBox="0 0 16 16"><circle cx="6" cy="5" r="3" fill="#fff" stroke="#111" stroke-width="1.3"/><path d="M4 8L1 12" stroke="#111" stroke-width="1.6"/><path d="M3 14H10M10 14l-2.5-2M10 14l-2.5 2" stroke="#111" stroke-width="1" fill="none"/><path d="M13.5 1V15M11.5 1H15M11.5 15H15" stroke="#111" stroke-width="1.2" fill="none"/></svg>
<svg class="i" style="left:449px;top:145px;" width="16" height="16" viewBox="0 0 16 16"><path d="M1 2.5H15M1 14H15" stroke="#222" stroke-width="1.4"/><path d="M2 11L6 6L10 10L14 6" stroke="#2c9434" stroke-width="2.2" fill="none"/></svg>
<div style="left:472px;top:143px;width:1px;height:21px;background:#bcbcbc;"></div>
<div style="left:473px;top:143px;width:1px;height:21px;background:#ffffff;"></div>
<svg class="i" style="left:480px;top:145px;" width="16" height="16" viewBox="0 0 16 16"><path d="M1 2H12M14.5 1V15" stroke="#18207c" stroke-width="1.5"/><path d="M2 4L6 11M6 4L2 11" stroke="#18207c" stroke-width="1.6"/><path d="M7 5C11 5 12 9 9 13M9 13l-.5-3.5M9 13l3.5-1" stroke="#18207c" stroke-width="1.5" fill="none"/></svg>
<div style="left:503px;top:143px;width:1px;height:21px;background:#bcbcbc;"></div>
<div style="left:504px;top:143px;width:1px;height:21px;background:#ffffff;"></div>
<svg class="i" style="left:511px;top:145px;" width="16" height="16" viewBox="0 0 16 16"><path d="M2 13L6 8L10 13L14 9" stroke="#2c9434" stroke-width="2.4" fill="none"/><path d="M6 8V1M6 1l-2.5 3M6 1l2.5 3" stroke="#111" stroke-width="1.2" fill="none"/></svg>
<svg class="i" style="left:534px;top:145px;" width="16" height="16" viewBox="0 0 16 16"><path d="M2 3L6 8L10 3L14 7" stroke="#2c9434" stroke-width="2.4" fill="none"/><path d="M8 7V15M8 15l-2.5-3M8 15l2.5-3" stroke="#111" stroke-width="1.2" fill="none"/></svg>
<div style="left:557px;top:143px;width:1px;height:21px;background:#bcbcbc;"></div>
<div style="left:558px;top:143px;width:1px;height:21px;background:#ffffff;"></div>
<div style="left:561px;top:142px;width:24px;height:23px;background:#f9f9f7;border:1px solid;border-color:#8a8a8a #fff #fff #8a8a8a;"></div>
<svg class="i" style="left:565px;top:146px;" width="16" height="16" viewBox="0 0 16 16"><path d="M8 1V8M3 6H13M3 6V9M13 6V9" stroke="#b82020" stroke-width="1.4" fill="none"/><circle cx="8" cy="3" r="1.8" fill="#b82020"/><text x="8" y="15.5" font-size="6" font-weight="700" fill="#c02828" text-anchor="middle">0.00</text></svg>
<svg class="i" style="left:588px;top:145px;" width="16" height="16" viewBox="0 0 16 16"><path d="M1 8H15" stroke="#222" stroke-width="1.6"/><path d="M1 8L5 4.5V11.5ZM15 8L11 4.5V11.5Z" fill="#2c8c3c" stroke="#222" stroke-width=".8"/><path d="M8 4V12" stroke="#222" stroke-width="1.5"/></svg>
<div style="left:610px;top:143px;width:1px;height:21px;background:#bcbcbc;"></div>
<div style="left:611px;top:143px;width:1px;height:21px;background:#ffffff;"></div>
<svg class="i" style="left:618px;top:145px;" width="16" height="16" viewBox="0 0 16 16"><path d="M8 2L13 8H10.5V13H5.5V8H3Z" fill="#e6e6e6" stroke="#b4b4b4" stroke-width="1.3"/></svg>
<svg class="i" style="left:641px;top:145px;" width="16" height="16" viewBox="0 0 16 16"><path d="M1 3H15M1 14H15" stroke="#c83030" stroke-width="1.4"/><path d="M2 11L6 6L10 11L14 7" stroke="#2c9434" stroke-width="2.4" fill="none"/></svg>
<svg class="i" style="left:664px;top:145px;" width="16" height="16" viewBox="0 0 16 16"><path d="M4 2V14" stroke="#18207c" stroke-width="1.6"/><path d="M1 12H12" stroke="#1c6c2c" stroke-width="1.6"/><path d="M6 6H15M6 6l3-2.5M6 6l3 2.5M15 6l-3-2.5M15 6l-3 2.5" stroke="#111" stroke-width="1.3" fill="none"/></svg>
<svg class="i" style="left:437px;top:671px;" width="18" height="16" viewBox="0 0 18 16"><path d="M11.5 1.5V13.5 M6 7.5H17" stroke="#111" stroke-width="4.2"/><path d="M11.5 2.5V12.5 M7 7.5H16" stroke="#dcdc58" stroke-width="1.8"/><path d="M1 11.5L6 8.5V14.5Z" fill="#111"/></svg>
<svg class="i" style="left:459px;top:671px;" width="18" height="16" viewBox="0 0 18 16"><path d="M7 1.5V13.5 M1.5 7.5H12.5" stroke="#111" stroke-width="4.2"/><path d="M7 2.5V12.5 M2.5 7.5H11.5" stroke="#dcdc58" stroke-width="1.8"/><path d="M18 11.5L13 8.5V14.5Z" fill="#111"/></svg>
<svg class="i" style="left:482px;top:671px;" width="18" height="16" viewBox="0 0 18 16"><path d="M3 0.5V14.5" stroke="#111" stroke-width="1.6"/><path d="M11.5 0.5V10.5 M7.5 5.5H15.5" stroke="#111" stroke-width="4.2"/><path d="M11.5 1.5V9.5 M8.5 5.5H14.5" stroke="#dcdc58" stroke-width="1.8"/><path d="M4 14H17" stroke="#223" stroke-width="1.8" stroke-dasharray="2 1"/><path d="M5 12l2-3" stroke="#223" stroke-width="1"/></svg>
<div style="left:430px;top:668px;width:1px;height:25px;background:#9a9a9a;"></div>
<div style="left:431px;top:668px;width:1px;height:25px;background:#fff;"></div>
<div style="left:505px;top:668px;width:1px;height:25px;background:#9a9a9a;"></div>
<div style="left:506px;top:668px;width:1px;height:25px;background:#fff;"></div>
<svg class="i" style="left:509px;top:671px;" width="18" height="16" viewBox="0 0 18 16"><path d="M1.5 11.5H16.5" stroke="#2c5c1c" stroke-width="2.6"/><path d="M1 11.5L6 8V15ZM17 11.5L12 8V15Z" fill="#2c5c1c"/><path d="M9 8V15" stroke="#2c5c1c" stroke-width="2"/><path d="M14 1V7M11 4H17" stroke="#141450" stroke-width="1.8"/></svg>
<div style="left:365px;top:721px;width:160px;height:28px;background:linear-gradient(180deg,#c9d1e5,#d3deee);border:1px solid #76839a;border-radius:6px 6px 0 0;"></div>
<svg class="i" style="left:370px;top:729px;" width="16" height="13" viewBox="0 0 16 13"><path d="M1 11.5L6.5 1.5L9 6L12 8.5L13.5 11.5Z" fill="#fff" stroke="#1a1a26" stroke-width="1.3" stroke-linejoin="round"/><path d="M8.5 6.5C10.5 7 12.5 9 14.5 11.5L11 11.5Z" fill="#6a3050"/></svg>
<span id="t31" class="t" style="left:389px;top:730.188px;font-size:11px;line-height:11px;color:#e4ebf6;letter-spacing:-0.369px;">Ou...</span>
<div style="left:420px;top:726.5px;width:31px;height:17px;background:linear-gradient(180deg,#d3dcee,#c4d0e8);border:1px solid #9aa8c0;border-radius:2px;"></div>
<svg class="i" style="left:427.5px;top:729px;" width="16" height="12" viewBox="0 0 16 12"><rect x="5.5" y="1.5" width="7" height="6" fill="#f2f5fb" stroke="#6a7690" stroke-width="1.1"/><rect x="2.5" y="4.5" width="7" height="6" fill="#f2f5fb" stroke="#6a7690" stroke-width="1.1"/><path d="M4 7.5h4" stroke="#6a7690"/></svg>
<div style="left:453.5px;top:726.5px;width:31px;height:17px;background:linear-gradient(180deg,#d3dcee,#c4d0e8);border:1px solid #9aa8c0;border-radius:2px;"></div>
<svg class="i" style="left:461px;top:729px;" width="16" height="12" viewBox="0 0 16 12"><rect x="3.5" y="2.5" width="9" height="7.5" fill="#f2f5fb" stroke="#6a7690" stroke-width="1.1"/><rect x="6" y="5" width="4" height="2.5" fill="#6a7690"/></svg>
<div style="left:487px;top:726.5px;width:31px;height:17px;background:linear-gradient(180deg,#d3dcee,#c4d0e8);border:1px solid #9aa8c0;border-radius:2px;"></div>
<svg class="i" style="left:494.5px;top:729px;" width="16" height="12" viewBox="0 0 16 12"><path d="M4.5 2.5L11.5 9.5M11.5 2.5L4.5 9.5" stroke="#6a7690" stroke-width="4" stroke-linecap="square" fill="none"/><path d="M4.5 2.5L11.5 9.5M11.5 2.5L4.5 9.5" stroke="#f2f5fb" stroke-width="2" stroke-linecap="square" fill="none"/></svg>
<div style="left:345px;top:769px;width:160px;height:28px;background:linear-gradient(180deg,#c9d1e5,#d3deee);border:1px solid #76839a;border-radius:6px 6px 0 0;"></div>
<svg class="i" style="left:350px;top:777px;" width="16" height="13" viewBox="0 0 16 13"><path d="M1 11.5L6.5 1.5L9 6L12 8.5L13.5 11.5Z" fill="#fff" stroke="#1a1a26" stroke-width="1.3" stroke-linejoin="round"/><path d="M8.5 6.5C10.5 7 12.5 9 14.5 11.5L11 11.5Z" fill="#6a3050"/></svg>
<span id="t32" class="t" style="left:369px;top:778.188px;font-size:11px;line-height:11px;color:#e4ebf6;letter-spacing:-0.369px;">Ou...</span>
<div style="left:400px;top:774.5px;width:31px;height:17px;background:linear-gradient(180deg,#d3dcee,#c4d0e8);border:1px solid #9aa8c0;border-radius:2px;"></div>
<svg class="i" style="left:407.5px;top:777px;" width="16" height="12" viewBox="0 0 16 12"><rect x="5.5" y="1.5" width="7" height="6" fill="#f2f5fb" stroke="#6a7690" stroke-width="1.1"/><rect x="2.5" y="4.5" width="7" height="6" fill="#f2f5fb" stroke="#6a7690" stroke-width="1.1"/><path d="M4 7.5h4" stroke="#6a7690"/></svg>
<div style="left:433.5px;top:774.5px;width:31px;height:17px;background:linear-gradient(180deg,#d3dcee,#c4d0e8);border:1px solid #9aa8c0;border-radius:2px;"></div>
<svg class="i" style="left:441px;top:777px;" width="16" height="12" viewBox="0 0 16 12"><rect x="3.5" y="2.5" width="9" height="7.5" fill="#f2f5fb" stroke="#6a7690" stroke-width="1.1"/><rect x="6" y="5" width="4" height="2.5" fill="#6a7690"/></svg>
<div style="left:467px;top:774.5px;width:31px;height:17px;background:linear-gradient(180deg,#d3dcee,#c4d0e8);border:1px solid #9aa8c0;border-radius:2px;"></div>
<svg class="i" style="left:474.5px;top:777px;" width="16" height="12" viewBox="0 0 16 12"><path d="M4.5 2.5L11.5 9.5M11.5 2.5L4.5 9.5" stroke="#6a7690" stroke-width="4" stroke-linecap="square" fill="none"/><path d="M4.5 2.5L11.5 9.5M11.5 2.5L4.5 9.5" stroke="#f2f5fb" stroke-width="2" stroke-linecap="square" fill="none"/></svg>
<div style="left:541px;top:772px;width:159px;height:28px;background:linear-gradient(180deg,#c9d1e5,#d3deee);border:1px solid #76839a;border-radius:6px 6px 0 0;"></div>
<svg class="i" style="left:546px;top:780px;" width="16" height="13" viewBox="0 0 16 13"><path d="M1 11.5L6.5 1.5L9 6L12 8.5L13.5 11.5Z" fill="#fff" stroke="#1a1a26" stroke-width="1.3" stroke-linejoin="round"/><path d="M8.5 6.5C10.5 7 12.5 9 14.5 11.5L11 11.5Z" fill="#6a3050"/></svg>
<span id="t33" class="t" style="left:565px;top:781.188px;font-size:11px;line-height:11px;color:#e4ebf6;letter-spacing:-0.513px;">Sig...</span>
<div style="left:595px;top:777.5px;width:31px;height:17px;background:linear-gradient(180deg,#d3dcee,#c4d0e8);border:1px solid #9aa8c0;border-radius:2px;"></div>
<svg class="i" style="left:602.5px;top:780px;" width="16" height="12" viewBox="0 0 16 12"><rect x="5.5" y="1.5" width="7" height="6" fill="#f2f5fb" stroke="#6a7690" stroke-width="1.1"/><rect x="2.5" y="4.5" width="7" height="6" fill="#f2f5fb" stroke="#6a7690" stroke-width="1.1"/><path d="M4 7.5h4" stroke="#6a7690"/></svg>
<div style="left:628.5px;top:777.5px;width:31px;height:17px;background:linear-gradient(180deg,#d3dcee,#c4d0e8);border:1px solid #9aa8c0;border-radius:2px;"></div>
<svg class="i" style="left:636px;top:780px;" width="16" height="12" viewBox="0 0 16 12"><rect x="3.5" y="2.5" width="9" height="7.5" fill="#f2f5fb" stroke="#6a7690" stroke-width="1.1"/><rect x="6" y="5" width="4" height="2.5" fill="#6a7690"/></svg>
<div style="left:662px;top:777.5px;width:31px;height:17px;background:linear-gradient(180deg,#d3dcee,#c4d0e8);border:1px solid #9aa8c0;border-radius:2px;"></div>
<svg class="i" style="left:669.5px;top:780px;" width="16" height="12" viewBox="0 0 16 12"><path d="M4.5 2.5L11.5 9.5M11.5 2.5L4.5 9.5" stroke="#6a7690" stroke-width="4" stroke-linecap="square" fill="none"/><path d="M4.5 2.5L11.5 9.5M11.5 2.5L4.5 9.5" stroke="#f2f5fb" stroke-width="2" stroke-linecap="square" fill="none"/></svg>
<div style="left:158px;top:768px;width:162px;height:33px;background:#a9c6a9;border:1px solid #98b498;border-radius:3px;box-shadow:inset 0 0 0 2px #b6d0b4;"></div>
<div style="left:160px;top:771px;width:158px;height:27px;background:#a9c6a9;border:1px solid #a9c6a9;border-radius:0;"></div>
<svg class="i" style="left:165px;top:778.5px;" width="16" height="13" viewBox="0 0 16 13"><path d="M1 11.5L6.5 1.5L9 6L12 8.5L13.5 11.5Z" fill="#fff" stroke="#1a1a26" stroke-width="1.3" stroke-linejoin="round"/><path d="M8.5 6.5C10.5 7 12.5 9 14.5 11.5L11 11.5Z" fill="#6a3050"/></svg>
<span id="t34" class="t" style="left:184px;top:779.688px;font-size:11px;line-height:11px;color:#ffffff;font-weight:700;letter-spacing:-0.769px;">Co...</span>
<div style="left:213px;top:776px;width:31px;height:17px;background:linear-gradient(180deg,#d3dcee,#c4d0e8);border:1px solid #9aa8c0;border-radius:2px;"></div>
<svg class="i" style="left:220.5px;top:778.5px;" width="16" height="12" viewBox="0 0 16 12"><rect x="5.5" y="1.5" width="7" height="6" fill="#f2f5fb" stroke="#6a7690" stroke-width="1.1"/><rect x="2.5" y="4.5" width="7" height="6" fill="#f2f5fb" stroke="#6a7690" stroke-width="1.1"/><path d="M4 7.5h4" stroke="#6a7690"/></svg>
<div style="left:246.5px;top:776px;width:31px;height:17px;background:linear-gradient(180deg,#d3dcee,#c4d0e8);border:1px solid #9aa8c0;border-radius:2px;"></div>
<svg class="i" style="left:254px;top:778.5px;" width="16" height="12" viewBox="0 0 16 12"><rect x="3.5" y="2.5" width="9" height="7.5" fill="#f2f5fb" stroke="#6a7690" stroke-width="1.1"/><rect x="6" y="5" width="4" height="2.5" fill="#6a7690"/></svg>
<div style="left:280px;top:776px;width:31px;height:17px;background:linear-gradient(180deg,#d3dcee,#c4d0e8);border:1px solid #9aa8c0;border-radius:2px;"></div>
<svg class="i" style="left:287.5px;top:778.5px;" width="16" height="12" viewBox="0 0 16 12"><path d="M4.5 2.5L11.5 9.5M11.5 2.5L4.5 9.5" stroke="#6a7690" stroke-width="4" stroke-linecap="square" fill="none"/><path d="M4.5 2.5L11.5 9.5M11.5 2.5L4.5 9.5" stroke="#f2f5fb" stroke-width="2" stroke-linecap="square" fill="none"/></svg>
<div style="left:2px;top:980px;width:158px;height:28px;background:linear-gradient(180deg,#c9d1e5,#d3deee);border:1px solid #76839a;border-radius:6px 6px 0 0;"></div>
<svg class="i" style="left:7px;top:988px;" width="16" height="13" viewBox="0 0 16 13"><path d="M1 11.5L6.5 1.5L9 6L12 8.5L13.5 11.5Z" fill="#fff" stroke="#1a1a26" stroke-width="1.3" stroke-linejoin="round"/><path d="M8.5 6.5C10.5 7 12.5 9 14.5 11.5L11 11.5Z" fill="#6a3050"/></svg>
<span id="t35" class="t" style="left:26px;top:989.188px;font-size:11px;line-height:11px;color:#dbe4f2;letter-spacing:-0.513px;">Sig...</span>
<div style="left:55px;top:985.5px;width:31px;height:17px;background:linear-gradient(180deg,#d3dcee,#c4d0e8);border:1px solid #9aa8c0;border-radius:2px;"></div>
<svg class="i" style="left:62.5px;top:988px;" width="16" height="12" viewBox="0 0 16 12"><rect x="5.5" y="1.5" width="7" height="6" fill="#f2f5fb" stroke="#6a7690" stroke-width="1.1"/><rect x="2.5" y="4.5" width="7" height="6" fill="#f2f5fb" stroke="#6a7690" stroke-width="1.1"/><path d="M4 7.5h4" stroke="#6a7690"/></svg>
<div style="left:88.5px;top:985.5px;width:31px;height:17px;background:linear-gradient(180deg,#d3dcee,#c4d0e8);border:1px solid #9aa8c0;border-radius:2px;"></div>
<svg class="i" style="left:96px;top:988px;" width="16" height="12" viewBox="0 0 16 12"><rect x="3.5" y="2.5" width="9" height="7.5" fill="#f2f5fb" stroke="#6a7690" stroke-width="1.1"/><rect x="6" y="5" width="4" height="2.5" fill="#6a7690"/></svg>
<div style="left:122px;top:985.5px;width:31px;height:17px;background:linear-gradient(180deg,#d3dcee,#c4d0e8);border:1px solid #9aa8c0;border-radius:2px;"></div>
<svg class="i" style="left:129.5px;top:988px;" width="16" height="12" viewBox="0 0 16 12"><path d="M4.5 2.5L11.5 9.5M11.5 2.5L4.5 9.5" stroke="#6a7690" stroke-width="4" stroke-linecap="square" fill="none"/><path d="M4.5 2.5L11.5 9.5M11.5 2.5L4.5 9.5" stroke="#f2f5fb" stroke-width="2" stroke-linecap="square" fill="none"/></svg>
<div style="left:162px;top:980px;width:158px;height:28px;background:linear-gradient(180deg,#c9d1e5,#d3deee);border:1px solid #76839a;border-radius:6px 6px 0 0;"></div>
<svg class="i" style="left:167px;top:988px;" width="16" height="13" viewBox="0 0 16 13"><path d="M1 11.5L6.5 1.5L9 6L12 8.5L13.5 11.5Z" fill="#fff" stroke="#1a1a26" stroke-width="1.3" stroke-linejoin="round"/><path d="M8.5 6.5C10.5 7 12.5 9 14.5 11.5L11 11.5Z" fill="#6a3050"/></svg>
<span id="t36" class="t" style="left:186px;top:989.188px;font-size:11px;line-height:11px;color:#dbe4f2;letter-spacing:-0.513px;">Sig...</span>
<div style="left:215px;top:985.5px;width:31px;height:17px;background:linear-gradient(180deg,#d3dcee,#c4d0e8);border:1px solid #9aa8c0;border-radius:2px;"></div>
<svg class="i" style="left:222.5px;top:988px;" width="16" height="12" viewBox="0 0 16 12"><rect x="5.5" y="1.5" width="7" height="6" fill="#f2f5fb" stroke="#6a7690" stroke-width="1.1"/><rect x="2.5" y="4.5" width="7" height="6" fill="#f2f5fb" stroke="#6a7690" stroke-width="1.1"/><path d="M4 7.5h4" stroke="#6a7690"/></svg>
<div style="left:248.5px;top:985.5px;width:31px;height:17px;background:linear-gradient(180deg,#d3dcee,#c4d0e8);border:1px solid #9aa8c0;border-radius:2px;"></div>
<svg class="i" style="left:256px;top:988px;" width="16" height="12" viewBox="0 0 16 12"><rect x="3.5" y="2.5" width="9" height="7.5" fill="#f2f5fb" stroke="#6a7690" stroke-width="1.1"/><rect x="6" y="5" width="4" height="2.5" fill="#6a7690"/></svg>
<div style="left:282px;top:985.5px;width:31px;height:17px;background:linear-gradient(180deg,#d3dcee,#c4d0e8);border:1px solid #9aa8c0;border-radius:2px;"></div>
<svg class="i" style="left:289.5px;top:988px;" width="16" height="12" viewBox="0 0 16 12"><path d="M4.5 2.5L11.5 9.5M11.5 2.5L4.5 9.5" stroke="#6a7690" stroke-width="4" stroke-linecap="square" fill="none"/><path d="M4.5 2.5L11.5 9.5M11.5 2.5L4.5 9.5" stroke="#f2f5fb" stroke-width="2" stroke-linecap="square" fill="none"/></svg>
<div style="left:296px;top:827px;width:198px;height:154px;background:#ceb4b4;border:1px solid #c2a8a8;border-radius:5px 5px 0 0;box-shadow:inset 0 0 0 1px #dcc8c8;"></div>
<svg class="i" style="left:304px;top:839px;" width="16" height="13" viewBox="0 0 16 13"><path d="M1 11.5L6.5 1.5L9 6L12 8.5L13.5 11.5Z" fill="#fff" stroke="#1a1a26" stroke-width="1.3" stroke-linejoin="round"/><path d="M8.5 6.5C10.5 7 12.5 9 14.5 11.5L11 11.5Z" fill="#6a3050"/></svg>
<span id="t37" class="t" style="left:322px;top:842.688px;font-size:11px;line-height:11px;color:#f6eeee;font-weight:700;letter-spacing:0.342px;">FFT Rea...</span>
<div style="left:384px;top:838px;width:31px;height:17px;background:linear-gradient(180deg,#d3dcee,#c4d0e8);border:1px solid #9aa8c0;border-radius:2px;"></div>
<svg class="i" style="left:391.5px;top:840.5px;" width="16" height="12" viewBox="0 0 16 12"><rect x="3.5" y="6" width="9" height="3.5" fill="#f2f5fb" stroke="#6a7690" stroke-width="1.1"/></svg>
<div style="left:418px;top:838px;width:31px;height:17px;background:linear-gradient(180deg,#d3dcee,#c4d0e8);border:1px solid #9aa8c0;border-radius:2px;"></div>
<svg class="i" style="left:425.5px;top:840.5px;" width="16" height="12" viewBox="0 0 16 12"><rect x="3.5" y="2.5" width="9" height="7.5" fill="#f2f5fb" stroke="#6a7690" stroke-width="1.1"/><rect x="6" y="5" width="4" height="2.5" fill="#6a7690"/></svg>
<div style="left:452px;top:838px;width:31px;height:17px;background:linear-gradient(180deg,#d3dcee,#c4d0e8);border:1px solid #9aa8c0;border-radius:2px;"></div>
<svg class="i" style="left:459.5px;top:840.5px;" width="16" height="12" viewBox="0 0 16 12"><path d="M4.5 2.5L11.5 9.5M11.5 2.5L4.5 9.5" stroke="#6a7690" stroke-width="4" stroke-linecap="square" fill="none"/><path d="M4.5 2.5L11.5 9.5M11.5 2.5L4.5 9.5" stroke="#f2f5fb" stroke-width="2" stroke-linecap="square" fill="none"/></svg>
<div style="left:303px;top:860px;width:183px;height:18px;background:#f0f0f0;border:1px solid;border-color:#fff #fff #d8d8d8 #fff;"></div>
<span id="t38" class="t" style="left:305px;top:863.688px;font-size:11px;line-height:11px;color:#111;letter-spacing:-0.289px;">Amplitude (Channel A)</span>
<div style="left:303px;top:878px;width:156px;height:93px;background:#000;"></div>
<span id="t39" class="t" style="left:320px;top:909.028px;font-size:29.5px;line-height:29.5px;color:#33d8d8;letter-spacing:0.236px;-webkit-text-stroke:0.45px #33d8d8;">2.8913 V</span>
<div style="left:459px;top:878px;width:27px;height:93px;background:#f4f2f2;"></div>
<div style="left:321px;top:979px;width:160px;height:29px;background:#ceb4b4;border:1px solid #c2a8a8;border-radius:4px 4px 0 0;"></div>
<svg class="i" style="left:326px;top:987.5px;" width="16" height="13" viewBox="0 0 16 13"><path d="M1 11.5L6.5 1.5L9 6L12 8.5L13.5 11.5Z" fill="#fff" stroke="#1a1a26" stroke-width="1.3" stroke-linejoin="round"/><path d="M8.5 6.5C10.5 7 12.5 9 14.5 11.5L11 11.5Z" fill="#6a3050"/></svg>
<span id="t40" class="t" style="left:345px;top:988.688px;font-size:11px;line-height:11px;color:#f8f0f0;font-weight:700;letter-spacing:-0.681px;">17...</span>
<div style="left:376px;top:985px;width:31px;height:17px;background:linear-gradient(180deg,#d3dcee,#c4d0e8);border:1px solid #9aa8c0;border-radius:2px;"></div>
<svg class="i" style="left:383.5px;top:987.5px;" width="16" height="12" viewBox="0 0 16 12"><rect x="5.5" y="1.5" width="7" height="6" fill="#f2f5fb" stroke="#6a7690" stroke-width="1.1"/><rect x="2.5" y="4.5" width="7" height="6" fill="#f2f5fb" stroke="#6a7690" stroke-width="1.1"/><path d="M4 7.5h4" stroke="#6a7690"/></svg>
<div style="left:409.5px;top:985px;width:31px;height:17px;background:linear-gradient(180deg,#d3dcee,#c4d0e8);border:1px solid #9aa8c0;border-radius:2px;"></div>
<svg class="i" style="left:417px;top:987.5px;" width="16" height="12" viewBox="0 0 16 12"><rect x="3.5" y="2.5" width="9" height="7.5" fill="#f2f5fb" stroke="#6a7690" stroke-width="1.1"/><rect x="6" y="5" width="4" height="2.5" fill="#6a7690"/></svg>
<div style="left:443px;top:985px;width:31px;height:17px;background:linear-gradient(180deg,#d3dcee,#c4d0e8);border:1px solid #9aa8c0;border-radius:2px;"></div>
<svg class="i" style="left:450.5px;top:987.5px;" width="16" height="12" viewBox="0 0 16 12"><path d="M4.5 2.5L11.5 9.5M11.5 2.5L4.5 9.5" stroke="#6a7690" stroke-width="4" stroke-linecap="square" fill="none"/><path d="M4.5 2.5L11.5 9.5M11.5 2.5L4.5 9.5" stroke="#f2f5fb" stroke-width="2" stroke-linecap="square" fill="none"/></svg>
<div style="left:769px;top:720px;width:200px;height:152px;background:#b9cfb9;border:1px solid #a8c0a8;border-radius:5px 5px 0 0;box-shadow:inset 0 0 0 1px #cadcc8;"></div>
<svg class="i" style="left:781px;top:730px;" width="16" height="13" viewBox="0 0 16 13"><path d="M1 11.5L6.5 1.5L9 6L12 8.5L13.5 11.5Z" fill="#fff" stroke="#1a1a26" stroke-width="1.3" stroke-linejoin="round"/><path d="M8.5 6.5C10.5 7 12.5 9 14.5 11.5L11 11.5Z" fill="#6a3050"/></svg>
<span id="t41" class="t" style="left:800px;top:733.688px;font-size:11px;line-height:11px;color:#f4f8f4;font-weight:700;letter-spacing:0.014px;">CT Readi...</span>
<div style="left:860px;top:729px;width:31px;height:17px;background:linear-gradient(180deg,#d3dcee,#c4d0e8);border:1px solid #9aa8c0;border-radius:2px;"></div>
<svg class="i" style="left:867.5px;top:731.5px;" width="16" height="12" viewBox="0 0 16 12"><rect x="3.5" y="6" width="9" height="3.5" fill="#f2f5fb" stroke="#6a7690" stroke-width="1.1"/></svg>
<div style="left:894px;top:729px;width:31px;height:17px;background:linear-gradient(180deg,#d3dcee,#c4d0e8);border:1px solid #9aa8c0;border-radius:2px;"></div>
<svg class="i" style="left:901.5px;top:731.5px;" width="16" height="12" viewBox="0 0 16 12"><rect x="3.5" y="2.5" width="9" height="7.5" fill="#f2f5fb" stroke="#6a7690" stroke-width="1.1"/><rect x="6" y="5" width="4" height="2.5" fill="#6a7690"/></svg>
<div style="left:928px;top:729px;width:31px;height:17px;background:linear-gradient(180deg,#d3dcee,#c4d0e8);border:1px solid #9aa8c0;border-radius:2px;"></div>
<svg class="i" style="left:935.5px;top:731.5px;" width="16" height="12" viewBox="0 0 16 12"><path d="M4.5 2.5L11.5 9.5M11.5 2.5L4.5 9.5" stroke="#6a7690" stroke-width="4" stroke-linecap="square" fill="none"/><path d="M4.5 2.5L11.5 9.5M11.5 2.5L4.5 9.5" stroke="#f2f5fb" stroke-width="2" stroke-linecap="square" fill="none"/></svg>
<div style="left:778px;top:751px;width:185px;height:17px;background:#f0f0f0;border:1px solid;border-color:#fff #fff #d8d8d8 #fff;"></div>
<span id="t42" class="t" style="left:781px;top:754.188px;font-size:11px;line-height:11px;color:#111;letter-spacing:-0.164px;">THD+N - relative (Channel A RMS)</span>
<div style="left:780px;top:770px;width:154px;height:93px;background:#000;"></div>
<span id="t43" class="t" style="left:788px;top:802.721px;font-size:27.5px;line-height:27.5px;color:#33d8d8;letter-spacing:0.389px;-webkit-text-stroke:0.45px #33d8d8;">0.10722 %</span>
<div style="left:934px;top:769px;width:29px;height:94px;background:#eef0ee;"></div>
<div style="left:463px;top:879px;width:20px;height:18px;background:#ececec;border:1px solid;border-color:#fff #7a7a7a #7a7a7a #fff;"></div>
<svg class="i" style="left:465px;top:881px;" width="16" height="14" viewBox="0 0 16 14"><rect x="0.5" y="1" width="15" height="9" fill="#0c5444"/><text x="8" y="8.3" font-size="7" font-weight="700" fill="#d8f4e8" text-anchor="middle">1.00</text><path d="M1 12.5H15" stroke="#1a6c54" stroke-width="1.6" stroke-dasharray="2 1"/></svg>
<div style="left:463px;top:901px;width:20px;height:18px;background:#ececec;border:1px solid;border-color:#fff #7a7a7a #7a7a7a #fff;"></div>
<svg class="i" style="left:465px;top:903px;" width="16" height="14" viewBox="0 0 16 14"><circle cx="7" cy="6" r="5" fill="#f4f4f4" stroke="#222" stroke-width="1.4"/><circle cx="7" cy="5" r="1.8" fill="#c02030"/><path d="M3 12C6 14 11 13 14 8M14 8l-3 .5M14 8l.5 3" stroke="#222" stroke-width="1.3" fill="none"/></svg>
<div style="left:463px;top:922px;width:20px;height:18px;background:#ececec;border:1px solid;border-color:#fff #7a7a7a #7a7a7a #fff;"></div>
<svg class="i" style="left:465px;top:924px;" width="16" height="14" viewBox="0 0 16 14"><rect x="1" y="5" width="11" height="8.5" fill="#fff" stroke="#222" stroke-width="1.2"/><path d="M1 8H12M1 10.7H12M4.7 5V13.5M8.3 5V13.5" stroke="#222" stroke-width=".9"/><path d="M9 6.5L14.5 1" stroke="#111" stroke-width="2.2"/></svg>
<div style="left:463px;top:943px;width:20px;height:18px;background:#ececec;border:1px solid;border-color:#fff #7a7a7a #7a7a7a #fff;"></div>
<svg class="i" style="left:465px;top:945px;" width="16" height="14" viewBox="0 0 16 14"><path d="M1 7H6M6 7l-2.5-2M6 7l-2.5 2M15 7H10M10 7l2.5-2M10 7l2.5 2" stroke="#b8b8b8" stroke-width="1.4" fill="none"/></svg>
<div style="left:940px;top:771px;width:20px;height:18px;background:#ececec;border:1px solid;border-color:#fff #7a7a7a #7a7a7a #fff;"></div>
<svg class="i" style="left:942px;top:773px;" width="16" height="14" viewBox="0 0 16 14"><rect x="0.5" y="1" width="15" height="9" fill="#0c5444"/><text x="8" y="8.3" font-size="7" font-weight="700" fill="#d8f4e8" text-anchor="middle">1.00</text><path d="M1 12.5H15" stroke="#1a6c54" stroke-width="1.6" stroke-dasharray="2 1"/></svg>
<div style="left:940px;top:792px;width:20px;height:18px;background:#ececec;border:1px solid;border-color:#fff #7a7a7a #7a7a7a #fff;"></div>
<svg class="i" style="left:942px;top:794px;" width="16" height="14" viewBox="0 0 16 14"><circle cx="7" cy="6" r="5" fill="#f4f4f4" stroke="#222" stroke-width="1.4"/><circle cx="7" cy="5" r="1.8" fill="#c02030"/><path d="M3 12C6 14 11 13 14 8M14 8l-3 .5M14 8l.5 3" stroke="#222" stroke-width="1.3" fill="none"/></svg>
<div style="left:940px;top:813px;width:20px;height:18px;background:#ececec;border:1px solid;border-color:#fff #7a7a7a #7a7a7a #fff;"></div>
<svg class="i" style="left:942px;top:815px;" width="16" height="14" viewBox="0 0 16 14"><rect x="1" y="5" width="11" height="8.5" fill="#fff" stroke="#222" stroke-width="1.2"/><path d="M1 8H12M1 10.7H12M4.7 5V13.5M8.3 5V13.5" stroke="#222" stroke-width=".9"/><path d="M9 6.5L14.5 1" stroke="#111" stroke-width="2.2"/></svg>
<div style="left:940px;top:835px;width:20px;height:18px;background:#ececec;border:1px solid;border-color:#fff #7a7a7a #7a7a7a #fff;"></div>
<svg class="i" style="left:942px;top:837px;" width="16" height="14" viewBox="0 0 16 14"><path d="M1 7H6M6 7l-2.5-2M6 7l-2.5 2M15 7H10M10 7l2.5-2M10 7l2.5 2" stroke="#b8b8b8" stroke-width="1.4" fill="none"/></svg>
<div style="left:956px;top:848px;width:237px;height:64px;background:#700a8c;border-radius:6px 6px 3px 3px;"></div>
<span id="t44" class="t" style="left:965px;top:857.842px;font-size:12px;line-height:12px;color:#f2e4f8;letter-spacing:-0.174px;">Legend</span>
<div style="left:1172px;top:856px;width:18px;height:18px;background:#e0483f;border-radius:1px;"></div>
<span id="t45" class="t" style="left:1178px;top:860.381px;font-size:9px;line-height:9px;color:#fff;font-weight:700;">x</span>
<div style="left:958px;top:879px;width:233px;height:32px;background:#ffffff;"></div>
<div style="left:958px;top:896px;width:233px;height:15px;background:#f6f1ee;"></div>
<div style="left:991px;top:880px;width:187px;height:16px;background:#0a7bd6;"></div>
<div style="left:961px;top:883px;width:11px;height:11px;background:#fff;border:1px solid;border-color:#555 #ddd #ddd #555;"></div>
<svg class="i" style="left:962px;top:884px;" width="10" height="9" viewBox="0 0 10 9"><path d="M1.5 4L4 7L8.5 1.5" stroke="#111" stroke-width="1.8" fill="none"/></svg>
<div style="left:961px;top:899px;width:11px;height:11px;background:#fff;border:1px solid;border-color:#555 #ddd #ddd #555;"></div>
<svg class="i" style="left:975px;top:881px;" width="16" height="15" viewBox="0 0 16 15"><rect width="16" height="15" fill="#040c14"/><path d="M1 11H15" stroke="#18a848" stroke-width="1.4"/><path d="M5 11V3" stroke="#20d050" stroke-width="1.2"/><path d="M1 13.5H15" stroke="#1c6c74" stroke-width="1"/></svg>
<svg class="i" style="left:975px;top:897px;" width="16" height="14" viewBox="0 0 16 14"><rect width="16" height="14" fill="#10040c"/><path d="M1 10H15" stroke="#b02020" stroke-width="1.4"/><path d="M5 10V4" stroke="#d83030" stroke-width="1.2"/><path d="M1 12.5H15" stroke="#701818" stroke-width="1"/></svg>
<span id="t46" class="t" style="left:997px;top:882.688px;font-size:11px;line-height:11px;color:#bfe2ff;letter-spacing:0.656px;">A</span>
<span id="t47" class="t" style="left:1010px;top:882.688px;font-size:11px;line-height:11px;color:#bfe2ff;letter-spacing:-0.126px;">Live FFT Trace</span>
<span id="t48" class="t" style="left:997px;top:898.688px;font-size:11px;line-height:11px;color:#222;letter-spacing:0.656px;">B</span>
<span id="t49" class="t" style="left:1010px;top:898.688px;font-size:11px;line-height:11px;color:#222;letter-spacing:-0.126px;">Live FFT Trace</span>
<svg class="i" style="left:1179px;top:882px;" width="12" height="13" viewBox="0 0 12 13"><path d="M1.5 1.5H6.5V9.5H1.5Z" fill="#fff" stroke="#223" stroke-width="1"/><path d="M5.5 4.5H10.5V12H5.5Z" fill="#fff" stroke="#223" stroke-width="1"/></svg>
<svg class="i" style="left:1179px;top:898px;" width="12" height="13" viewBox="0 0 12 13"><path d="M1.5 1.5H6.5V9.5H1.5Z" fill="#f4f4f4" stroke="#b0b0b0" stroke-width="1"/><path d="M5.5 4.5H10.5V12H5.5Z" fill="#f4f4f4" stroke="#b0b0b0" stroke-width="1"/></svg>
<div style="left:480px;top:979px;width:160px;height:29px;background:#1aa81a;border-radius:5px 5px 0 0;border:1px solid #27b427;"></div>
<svg class="i" style="left:485px;top:987px;" width="16" height="13" viewBox="0 0 16 13"><path d="M1 11.5L6.5 1.5L9 6L12 8.5L13.5 11.5Z" fill="#fff" stroke="#0c5a10" stroke-width="1.2" stroke-linejoin="round"/></svg>
<span id="t50" class="t" style="left:504px;top:989.188px;font-size:11px;line-height:11px;color:#dcffd8;font-weight:700;letter-spacing:0.089px;">1.6...</span>
<div style="left:535px;top:985px;width:31px;height:17px;background:linear-gradient(180deg,#cdc0f4,#b4a8ec);border:1px solid #8ed48e;border-radius:2px;"></div>
<svg class="i" style="left:542.5px;top:987.5px;" width="16" height="12" viewBox="0 0 16 12"><rect x="5.5" y="1.5" width="7" height="6" fill="#ece8fc" stroke="#50508c" stroke-width="1.1"/><rect x="2.5" y="4.5" width="7" height="6" fill="#ece8fc" stroke="#50508c" stroke-width="1.1"/><path d="M4 7.5h4" stroke="#50508c"/></svg>
<div style="left:568.5px;top:985px;width:31px;height:17px;background:linear-gradient(180deg,#cdc0f4,#b4a8ec);border:1px solid #8ed48e;border-radius:2px;"></div>
<svg class="i" style="left:576px;top:987.5px;" width="16" height="12" viewBox="0 0 16 12"><rect x="3.5" y="2.5" width="9" height="7.5" fill="#ece8fc" stroke="#50508c" stroke-width="1.1"/><rect x="6" y="5" width="4" height="2.5" fill="#50508c"/></svg>
<div style="left:602px;top:985px;width:31px;height:17px;background:linear-gradient(180deg,#e8786c,#d0382c);border:1px solid #b85048;border-radius:2px;"></div>
<svg class="i" style="left:609.5px;top:987.5px;" width="16" height="12" viewBox="0 0 16 12"><path d="M4.5 2.5L11.5 9.5M11.5 2.5L4.5 9.5" stroke="#b83028" stroke-width="4" stroke-linecap="square" fill="none"/><path d="M4.5 2.5L11.5 9.5M11.5 2.5L4.5 9.5" stroke="#fff4f0" stroke-width="2" stroke-linecap="square" fill="none"/></svg>
<svg class="i" style="left:1311px;top:1011px;" width="15" height="15" viewBox="0 0 15 15"><path d="M2 8A5.5 5 0 0 1 13 8Z" fill="#f4f4f4" stroke="#222" stroke-width="1.3"/><rect x="1.5" y="8" width="12" height="3" fill="#fff" stroke="#222" stroke-width="1"/><path d="M3 13.5H12M12 13.5l-2-1.5M12 13.5l-2 1.5" stroke="#111" stroke-width="1.1" fill="none"/><circle cx="7.5" cy="5.5" r="1.2" fill="#333"/></svg>
<svg class="i" style="left:1330px;top:1011px;" width="15" height="15" viewBox="0 0 15 15"><rect x="1.5" y="1.5" width="12" height="8" fill="#2a2a2a" stroke="#111" stroke-width="1"/><path d="M3 4H12M3 6.5H12" stroke="#e8e8e8" stroke-width="1"/><path d="M4 11.5H11M2 13.5H13" stroke="#222" stroke-width="1.2"/><path d="M7.5 9.5V13" stroke="#222" stroke-width="1.2"/></svg>
<div style="left:1349px;top:1011px;width:38px;height:15px;background:#f6f6f6;border:1px solid;border-color:#b8b8b8 #fff #fff #b8b8b8;"></div>
<span id="t51" class="t" style="left:1357px;top:1013.57px;font-size:7px;line-height:7px;color:#a8a8a8;letter-spacing:0.461px;">S/card</span>
<svg class="i" style="left:1362px;top:1020px;" width="14" height="5" viewBox="0 0 14 5"><path d="M1 2.5H11M11 2.5l-2-1.5M11 2.5l-2 1.5" stroke="#b4b4b4" stroke-width=".9" fill="none"/></svg>
<div style="left:1390px;top:1011px;width:1px;height:15px;background:#d0d0d0;"></div>
<svg class="i" style="left:1392px;top:1014px;" width="12" height="10" viewBox="0 0 12 10"><path d="M0.5 5H7" stroke="#111" stroke-width="2.6"/><path d="M6 0.8L11.5 5L6 9.2Z" fill="#111"/></svg>
<div style="left:1407px;top:1011px;width:1px;height:15px;background:#c4c4c4;"></div>
<span id="t52" class="t" style="left:1409px;top:1013.77px;font-size:11.5px;line-height:11.5px;color:#111;letter-spacing:0.337px;">Bal/unbal</span>
<div style="left:1464px;top:1012px;width:49px;height:15px;background:#f00a0a;"></div>
<span id="t53" class="t" style="left:1478px;top:1015.53px;font-size:10px;line-height:10px;color:#c81818;letter-spacing:0.292px;">BNC</span>
<div style="left:1518px;top:1012px;width:30px;height:15px;background:#f00a0a;"></div>
<svg class="i" style="left:1523px;top:1013px;" width="20" height="13" viewBox="0 0 20 13"><path d="M3 4H17M3 8H17M10 1V12M6 10l8-8" stroke="#c01414" stroke-width="1.2" fill="none"/></svg>
<div style="left:1553px;top:1012px;width:15px;height:15px;background:#e01010;"></div>
<span id="t54" class="t" style="left:1557px;top:1015.38px;font-size:9px;line-height:9px;color:#b81414;letter-spacing:-0.016px;">S</span>
<div style="left:1572px;top:1012px;width:24px;height:6px;background:#f00a0a;"></div>
<span id="t55" class="t" style="left:1596px;top:1014.69px;font-size:11px;line-height:11px;color:#222;letter-spacing:-0.125px;">2</span>
<div style="left:1603px;top:1012px;width:6px;height:6px;background:#e81414;"></div>
<div style="left:1610px;top:1011px;width:1px;height:15px;background:#d4d4d4;"></div>
<div style="left:1630px;top:1011px;width:56px;height:15px;background:#f4f4f4;border:1px solid;border-color:#c0c0c0 #fff #fff #c0c0c0;"></div>
<div style="left:1688px;top:1012px;width:43px;height:14px;background:#f6f6f6;border:1px solid #222;border-radius:2px 2px 3px 3px;"></div>
<span id="t56" class="t" style="left:1692px;top:1013.77px;font-size:11.5px;line-height:11.5px;color:#111;font-weight:700;letter-spacing:-0.013px;">Page 1</span>
<div style="left:1731px;top:1012px;width:44px;height:14px;background:#f6f6f6;border:1px solid #222;border-radius:2px 2px 3px 3px;"></div>
<span id="t57" class="t" style="left:1735px;top:1013.77px;font-size:11.5px;line-height:11.5px;color:#111;font-weight:700;letter-spacing:-0.013px;">Page 2</span>
<div style="left:1776px;top:1012px;width:43px;height:14px;background:#f6f6f6;border:1px solid #222;border-radius:2px 2px 3px 3px;"></div>
<span id="t58" class="t" style="left:1780px;top:1013.77px;font-size:11.5px;line-height:11.5px;color:#111;font-weight:700;letter-spacing:-0.013px;">Page 3</span>
<div style="left:1820px;top:1012px;width:43px;height:14px;background:#f6f6f6;border:1px solid #222;border-radius:2px 2px 3px 3px;"></div>
<span id="t59" class="t" style="left:1824px;top:1013.77px;font-size:11.5px;line-height:11.5px;color:#111;font-weight:700;letter-spacing:-0.013px;">Page 4</span>
<div style="left:1863px;top:1012px;width:44px;height:14px;background:#f6f6f6;border:1px solid #222;border-radius:2px 2px 3px 3px;"></div>
<span id="t60" class="t" style="left:1868px;top:1013.91px;font-size:10.5px;line-height:10.5px;color:#111;letter-spacing:-0.047px;">Page 5</span>
<svg class="i" style="left:1737px;top:967px" width="160" height="50" viewBox="0 0 160 50"><g opacity="0.9"><rect x="20" y="-0.4" width="9.3" height="44.4" fill="#5c6892"/><rect x="1" y="7.2" width="19" height="3.6" fill="#5c6892"/><rect x="2" y="24" width="18" height="3.2" fill="#5c6892"/><rect x="0.5" y="40.6" width="19.5" height="3.4" fill="#5c6892"/><rect x="35.3" y="0" width="4.7" height="46" fill="#5a92ce"/><rect x="40" y="5.4" width="16" height="3.6" fill="#5a92ce"/><rect x="60" y="1.4" width="11" height="15.1" fill="#5a92ce"/><rect x="35.3" y="13" width="24.7" height="3.5" fill="#5a92ce"/><rect x="50.6" y="16.5" width="8.8" height="12.5" fill="#5a92ce"/><rect x="40" y="29" width="27" height="3.5" fill="#5a92ce"/><rect x="58.5" y="32.5" width="8.5" height="13.5" fill="#5a92ce"/><path d="M54 9L61 1.4L61 6L57 9Z" fill="#5a92ce"/><rect x="67.5" y="3.5" width="2" height="2" fill="#c8d8ec"/></g><text x="76.3" y="21.8" font-size="10" font-weight="700" fill="#737b86" textLength="73" lengthAdjust="spacingAndGlyphs">HIFI168.com</text><text x="76.3" y="44.4" font-size="21" font-weight="300" fill="#747a82" style="font-family:'Liberation Sans','Noto Sans CJK SC',sans-serif" textLength="73" lengthAdjust="spacingAndGlyphs">发烧网</text></svg>
</div></body></html>
